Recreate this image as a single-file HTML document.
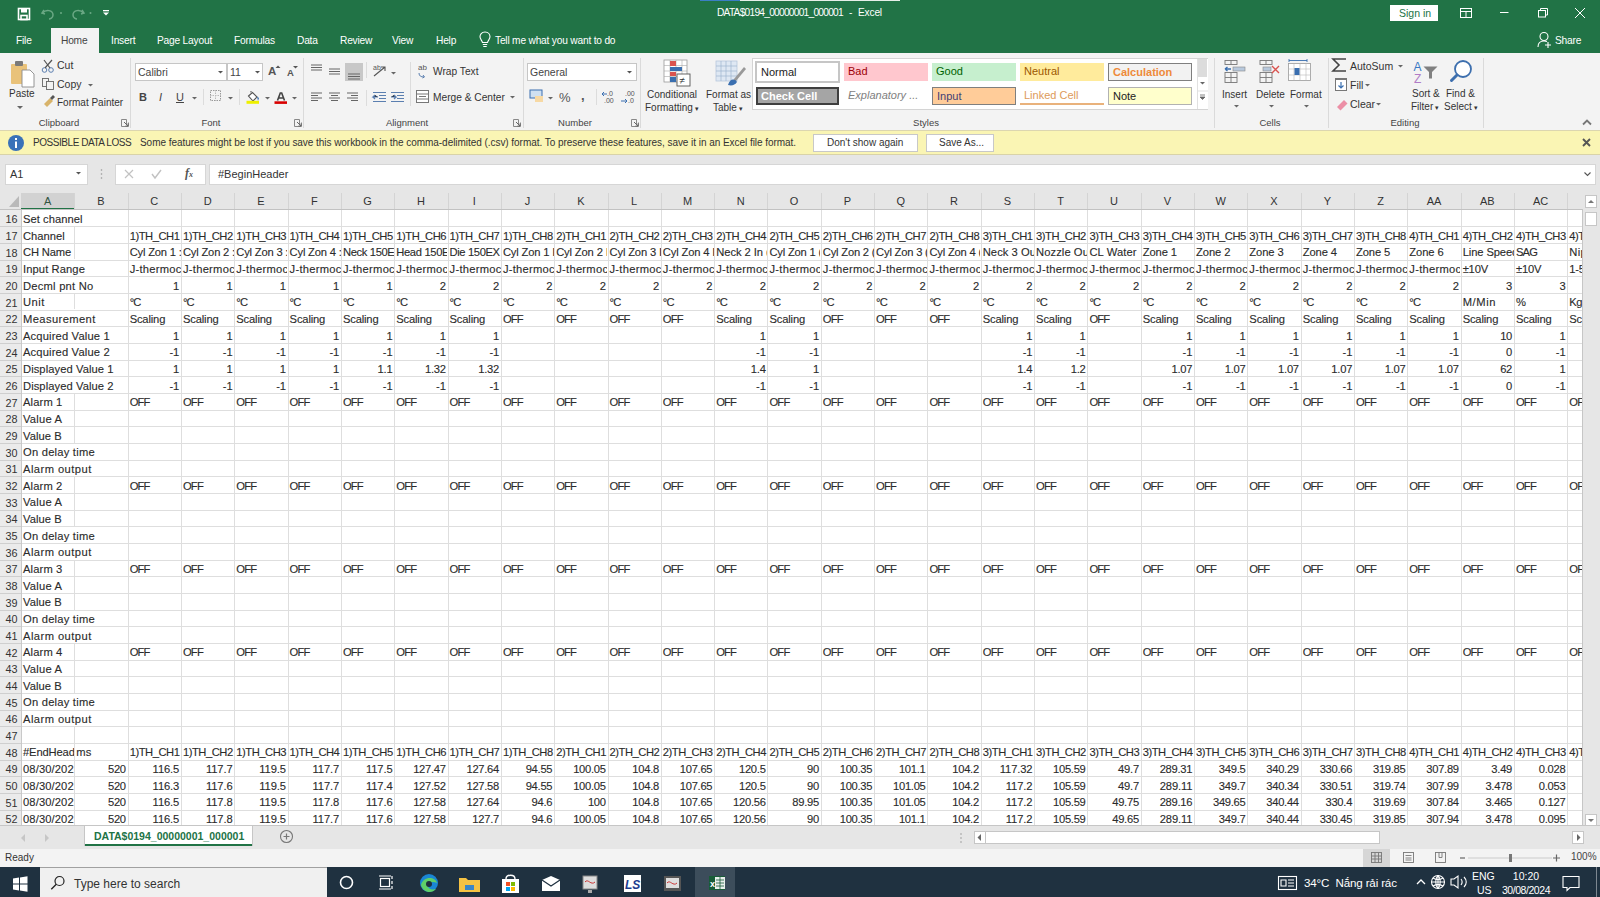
<!DOCTYPE html><html><head><meta charset="utf-8"><style>html,body{margin:0;padding:0;width:1600px;height:897px;overflow:hidden;position:relative;background:#fff;font-family:'Liberation Sans', sans-serif} .c{position:absolute;height:14px;overflow:hidden;white-space:nowrap;box-sizing:border-box;font:11.2px 'Liberation Sans', sans-serif;color:#2b2b2b;letter-spacing:-0.4px;-webkit-text-stroke:0.12px #2b2b2b} .r{text-align:right;padding-right:1.7px} .l{text-align:left;padding-left:2px} .d{letter-spacing:0.35px}</style></head><body><div style="position:absolute;left:0px;top:0px;width:1600px;height:53px;background:#217346"></div><div style="position:absolute;left:700px;top:0px;width:40px;height:1px;background:#3b7fc4"></div><div style="position:absolute;left:740px;top:0px;width:160px;height:1px;background:#e6efe9"></div><svg style="position:absolute;left:0;top:0" width="130" height="27">
<g fill="none" stroke="#fff" stroke-width="1.6">
<rect x="18.5" y="8.5" width="11" height="11"/>
<rect x="21" y="9" width="6" height="3.5" fill="#fff" stroke="none"/>
<rect x="21" y="15.5" width="6" height="4" />
</g>
<g fill="none" stroke="#6aa884" stroke-width="1.5">
<path d="M44 10 l-2 3 l3 1"/><path d="M42.5 13 C46 9,53 10,53 15 C53 18,50 19,49 19"/>
<path d="M82 10 l2 3 l-3 1"/><path d="M83.5 13 C80 9,73 10,73 15 C73 18,76 19,77 19"/>
</g>
<circle cx="61" cy="13" r="1" fill="#6aa884"/><circle cx="90.5" cy="13" r="1" fill="#6aa884"/>
<rect x="103" y="10" width="6" height="1.3" fill="#fff"/>
<path d="M103 12.5 h6 l-3 3 z" fill="#fff"/>
</svg><div style="position:absolute;left:717px;top:7px;white-space:nowrap;font:10.2px 'Liberation Sans', sans-serif;color:#fff;letter-spacing:-0.75px">DATA$0194_00000001_000001</div><div style="position:absolute;left:849px;top:7px;white-space:nowrap;font:10.2px 'Liberation Sans', sans-serif;color:#fff;">-</div><div style="position:absolute;left:858px;top:7px;white-space:nowrap;font:10.2px 'Liberation Sans', sans-serif;color:#fff;letter-spacing:-0.2px">Excel</div><div style="position:absolute;left:1390px;top:5px;width:48px;height:16px;background:#fff"></div><div style="position:absolute;left:1399px;top:7px;white-space:nowrap;font:10.5px 'Liberation Sans', sans-serif;color:#217346;">Sign in</div><svg style="position:absolute;left:1450;top:0" width="150" height="27">
<g fill="none" stroke="#fff" stroke-width="1">
<rect x="10.5" y="8.5" width="11" height="9"/><path d="M10.5 11.5 h11 M16 11.5 v6"/>
<path d="M50 12.5 h8.5"/>
<rect x="88.5" y="10.5" width="7" height="6.5"/><path d="M90.5 10.5 v-2 h7 v6.5 h-2"/>
<path d="M125 8 l10 10 M135 8 l-10 10"/>
</g></svg><div style="position:absolute;left:51px;top:28px;width:48px;height:25px;background:#f3f3f3"></div><div style="position:absolute;left:16px;top:35px;white-space:nowrap;font:10.2px 'Liberation Sans', sans-serif;color:#fff;letter-spacing:-0.2px">File</div><div style="position:absolute;left:61px;top:35px;white-space:nowrap;font:10.2px 'Liberation Sans', sans-serif;color:#444;letter-spacing:-0.2px">Home</div><div style="position:absolute;left:111px;top:35px;white-space:nowrap;font:10.2px 'Liberation Sans', sans-serif;color:#fff;letter-spacing:-0.2px">Insert</div><div style="position:absolute;left:157px;top:35px;white-space:nowrap;font:10.2px 'Liberation Sans', sans-serif;color:#fff;letter-spacing:-0.2px">Page Layout</div><div style="position:absolute;left:234px;top:35px;white-space:nowrap;font:10.2px 'Liberation Sans', sans-serif;color:#fff;letter-spacing:-0.2px">Formulas</div><div style="position:absolute;left:297px;top:35px;white-space:nowrap;font:10.2px 'Liberation Sans', sans-serif;color:#fff;letter-spacing:-0.2px">Data</div><div style="position:absolute;left:340px;top:35px;white-space:nowrap;font:10.2px 'Liberation Sans', sans-serif;color:#fff;letter-spacing:-0.2px">Review</div><div style="position:absolute;left:392px;top:35px;white-space:nowrap;font:10.2px 'Liberation Sans', sans-serif;color:#fff;letter-spacing:-0.2px">View</div><div style="position:absolute;left:436px;top:35px;white-space:nowrap;font:10.2px 'Liberation Sans', sans-serif;color:#fff;letter-spacing:-0.2px">Help</div><svg style="position:absolute;left:478px;top:30px" width="14" height="20"><g fill="none" stroke="#fff" stroke-width="1.1">
<path d="M7 2 C3.5 2 2 4.5 2 6.8 C2 9 4 10.5 4.5 12.5 L9.5 12.5 C10 10.5 12 9 12 6.8 C12 4.5 10.5 2 7 2 Z"/><path d="M4.8 14.5 h4.4 M5.3 16.5 h3.4"/></g></svg><div style="position:absolute;left:495px;top:35px;white-space:nowrap;font:10.2px 'Liberation Sans', sans-serif;color:#fff;letter-spacing:-0.2px">Tell me what you want to do</div><svg style="position:absolute;left:1536px;top:30px" width="18" height="20"><g fill="none" stroke="#fff" stroke-width="1.1">
<circle cx="8" cy="6.5" r="4"/><path d="M2 17 C2 12.5 5 11 8 11 C9 11 10 11.2 11 11.6"/><path d="M12 12 v6 M9 15 h6"/></g></svg><div style="position:absolute;left:1555px;top:35px;white-space:nowrap;font:10.2px 'Liberation Sans', sans-serif;color:#fff;letter-spacing:-0.2px">Share</div><div style="position:absolute;left:0px;top:53px;width:1600px;height:78px;background:#f3f3f3"></div><div style="position:absolute;left:130px;top:58px;width:1px;height:70px;background:#dadada"></div><div style="position:absolute;left:303px;top:58px;width:1px;height:70px;background:#dadada"></div><div style="position:absolute;left:523px;top:58px;width:1px;height:70px;background:#dadada"></div><div style="position:absolute;left:640px;top:58px;width:1px;height:70px;background:#dadada"></div><div style="position:absolute;left:1214px;top:58px;width:1px;height:70px;background:#dadada"></div><div style="position:absolute;left:1328px;top:58px;width:1px;height:70px;background:#dadada"></div><div style="position:absolute;left:1483px;top:58px;width:1px;height:70px;background:#dadada"></div><div style="position:absolute;left:-1px;top:117px;width:120px;text-align:center;font:9.5px 'Liberation Sans', sans-serif;color:#444;">Clipboard</div><div style="position:absolute;left:151px;top:117px;width:120px;text-align:center;font:9.5px 'Liberation Sans', sans-serif;color:#444;">Font</div><div style="position:absolute;left:347px;top:117px;width:120px;text-align:center;font:9.5px 'Liberation Sans', sans-serif;color:#444;">Alignment</div><div style="position:absolute;left:515px;top:117px;width:120px;text-align:center;font:9.5px 'Liberation Sans', sans-serif;color:#444;">Number</div><div style="position:absolute;left:866px;top:117px;width:120px;text-align:center;font:9.5px 'Liberation Sans', sans-serif;color:#444;">Styles</div><div style="position:absolute;left:1210px;top:117px;width:120px;text-align:center;font:9.5px 'Liberation Sans', sans-serif;color:#444;">Cells</div><div style="position:absolute;left:1345px;top:117px;width:120px;text-align:center;font:9.5px 'Liberation Sans', sans-serif;color:#444;">Editing</div><svg style="position:absolute;left:121px;top:119px" width="8" height="8"><path d="M0.5 0.5 h5 v5 M0.5 0.5 v7 h7 v-4" fill="none" stroke="#888" stroke-width="1"/><path d="M3 3 l4 4 M7 4.5 v2.5 h-2.5" fill="none" stroke="#666"/></svg><svg style="position:absolute;left:294px;top:119px" width="8" height="8"><path d="M0.5 0.5 h5 v5 M0.5 0.5 v7 h7 v-4" fill="none" stroke="#888" stroke-width="1"/><path d="M3 3 l4 4 M7 4.5 v2.5 h-2.5" fill="none" stroke="#666"/></svg><svg style="position:absolute;left:513px;top:119px" width="8" height="8"><path d="M0.5 0.5 h5 v5 M0.5 0.5 v7 h7 v-4" fill="none" stroke="#888" stroke-width="1"/><path d="M3 3 l4 4 M7 4.5 v2.5 h-2.5" fill="none" stroke="#666"/></svg><svg style="position:absolute;left:631px;top:119px" width="8" height="8"><path d="M0.5 0.5 h5 v5 M0.5 0.5 v7 h7 v-4" fill="none" stroke="#888" stroke-width="1"/><path d="M3 3 l4 4 M7 4.5 v2.5 h-2.5" fill="none" stroke="#666"/></svg><svg style="position:absolute;left:8px;top:58px" width="30" height="60">
<rect x="3" y="6" width="16" height="20" rx="1" fill="#e9c27a"/>
<rect x="7" y="3" width="8" height="5" rx="1" fill="#7a7a7a"/>
<path d="M14 12 h8 l4 4 v13 h-12 z" fill="#fff" stroke="#8a8a8a" stroke-width="0.9"/>
</svg><div style="position:absolute;left:9px;top:88px;white-space:nowrap;font:10px 'Liberation Sans', sans-serif;color:#333;">Paste</div><svg style="position:absolute;left:17px;top:106px" width="8" height="5"><path d="M0 0 h6 l-3 3 z" fill="#666"/></svg><svg style="position:absolute;left:40px;top:58px" width="18" height="52">
<g fill="none" stroke="#5b7fb0" stroke-width="1"><circle cx="4.5" cy="12" r="2.3"/><circle cx="11" cy="12" r="2.3"/></g>
<path d="M5 10 L12 2 M10 10 L4 2" stroke="#555" stroke-width="1.2"/>
<g fill="none" stroke="#666" stroke-width="0.9"><rect x="2.5" y="20.5" width="6" height="8"/><rect x="6.5" y="23.5" width="7" height="8" fill="#f3f3f3"/></g>
<path d="M4 46 l6 -6 l3 3 l-6 6 z" fill="#d8b36a"/><path d="M10 40 l3 -3 l2 2 l-3 3z" fill="#555"/>
</svg><div style="position:absolute;left:57px;top:59px;white-space:nowrap;font:10.5px 'Liberation Sans', sans-serif;color:#333;">Cut</div><div style="position:absolute;left:57px;top:78px;white-space:nowrap;font:10.5px 'Liberation Sans', sans-serif;color:#333;">Copy</div><svg style="position:absolute;left:88px;top:84px" width="8" height="5"><path d="M0 0 h5 l-2.5 2.5 z" fill="#666"/></svg><div style="position:absolute;left:57px;top:97px;white-space:nowrap;font:10px 'Liberation Sans', sans-serif;color:#333;">Format Painter</div><div style="position:absolute;left:135px;top:63px;width:92px;height:18px;background:#fff;border:1px solid #c6c6c6;box-sizing:border-box"></div><div style="position:absolute;left:138px;top:66px;white-space:nowrap;font:10.5px 'Liberation Sans', sans-serif;color:#444;">Calibri</div><svg style="position:absolute;left:218px;top:71px" width="6" height="4"><path d="M0 0 h5 l-2.5 2.5 z" fill="#555"/></svg><div style="position:absolute;left:227px;top:63px;width:36px;height:18px;background:#fff;border:1px solid #c6c6c6;box-sizing:border-box"></div><div style="position:absolute;left:230px;top:66px;white-space:nowrap;font:10.5px 'Liberation Sans', sans-serif;color:#444;">11</div><svg style="position:absolute;left:255px;top:71px" width="6" height="4"><path d="M0 0 h5 l-2.5 2.5 z" fill="#555"/></svg><div style="position:absolute;left:268px;top:65px;white-space:nowrap;font:bold 11.5px 'Liberation Sans', sans-serif;color:#555;">A</div><svg style="position:absolute;left:275px;top:65px" width="6" height="4"><path d="M0.5 3 L3 0.5 L5.5 3z" fill="#555"/></svg><div style="position:absolute;left:287px;top:67px;white-space:nowrap;font:bold 9.5px 'Liberation Sans', sans-serif;color:#555;">A</div><svg style="position:absolute;left:293px;top:66px" width="6" height="4"><path d="M0 0 h5 l-2.5 2.5 z" fill="#555"/></svg><div style="position:absolute;left:139px;top:91px;white-space:nowrap;font:bold 11px 'Liberation Sans', sans-serif;color:#444;">B</div><div style="position:absolute;left:159px;top:91px;white-space:nowrap;font:italic 11px 'Liberation Sans', sans-serif;color:#444;">I</div><div style="position:absolute;left:176px;top:91px;white-space:nowrap;font:11px 'Liberation Sans', sans-serif;color:#444;text-decoration:underline;">U</div><svg style="position:absolute;left:192px;top:97px" width="6" height="4"><path d="M0 0 h5 l-2.5 2.5 z" fill="#666"/></svg><div style="position:absolute;left:203px;top:89px;width:1px;height:16px;background:#dcdcdc"></div><svg style="position:absolute;left:210px;top:90px" width="12" height="12"><rect x="0.5" y="0.5" width="10" height="10" fill="none" stroke="#999" stroke-dasharray="1.5 1"/><path d="M5.5 0 v11 M0 5.5 h11" stroke="#bbb" stroke-dasharray="1.5 1"/></svg><svg style="position:absolute;left:228px;top:97px" width="6" height="4"><path d="M0 0 h5 l-2.5 2.5 z" fill="#666"/></svg><div style="position:absolute;left:239px;top:89px;width:1px;height:16px;background:#dcdcdc"></div><svg style="position:absolute;left:245px;top:90px" width="16" height="16"><path d="M3.5 6 l4 -3.5 l4.5 4.5 l-4 4 z" fill="#fff" stroke="#555" stroke-width="1.1"/><path d="M6 2.5 v-1.5" stroke="#555" stroke-width="1.1"/><path d="M12 6.5 l2 1.5 l-1 3z" fill="#3a6fb0"/><rect x="1.5" y="10.8" width="12.5" height="3" fill="#eef000"/></svg><svg style="position:absolute;left:265px;top:97px" width="6" height="4"><path d="M0 0 h5 l-2.5 2.5 z" fill="#666"/></svg><svg style="position:absolute;left:273px;top:90px" width="16" height="16"><path d="M4.5 10.5 L7.3 3 h1.4 L11.5 10.5 M5.8 8 h4.4" fill="none" stroke="#444" stroke-width="1.6"/><rect x="1.5" y="11.3" width="12.5" height="2.6" fill="#d80000"/></svg><svg style="position:absolute;left:292px;top:97px" width="6" height="4"><path d="M0 0 h5 l-2.5 2.5 z" fill="#666"/></svg><svg style="position:absolute;left:308px;top:60px" width="215" height="52">
<g stroke="#666" stroke-width="1.1">
<path d="M3 5 h11 M3 7.5 h11 M3 10 h11"/>
<path d="M21 9 h11 M21 11.5 h11 M21 14 h11"/>
<rect x="37" y="3" width="18" height="18" fill="#c8c8c8" stroke="none"/>
<path d="M40 14 h12 M40 16.5 h12 M40 19 h12"/>
<path d="M3 33 h11 M3 35.5 h7 M3 38 h11 M3 40.5 h7"/>
<path d="M21 33 h11 M23 35.5 h7 M21 38 h11 M23 40.5 h7"/>
<path d="M39 33 h11 M43 35.5 h7 M39 38 h11 M43 40.5 h7"/>
</g>
<rect x="58" y="2" width="1" height="16" fill="#dcdcdc"/><rect x="58" y="30" width="1" height="16" fill="#dcdcdc"/>
<g stroke="#5b7fb0" stroke-width="1.2"><path d="M65 32.5 h13 M71 35.5 h7 M71 38.5 h7 M65 41.5 h13"/><path d="M70 37 h-5 l2 -2 M65 37 l2 2"/>
<path d="M83 32.5 h13 M89 35.5 h7 M89 38.5 h7 M83 41.5 h13"/><path d="M83 37 h5 l-2 -2 M88 37 l-2 2"/></g>
<g fill="none" stroke="#555" stroke-width="1.1"><path d="M66 16 l11 -9 M73 7 l4 0 l0 4"/></g>
<text x="65" y="10" font-size="7" fill="#555" font-family="Liberation Sans">ab</text>
<path d="M83 12 h5 l-2.5 2.5z" fill="#666"/>
<rect x="102" y="2" width="1" height="44" fill="#dcdcdc"/>
</svg><div style="position:absolute;left:309px;top:62px;white-space:nowrap;"></div><svg style="position:absolute;left:418px;top:63px" width="14" height="16"><text x="0" y="7" font-size="8" fill="#555" font-family="Liberation Sans">ab</text><path d="M1 10 c0 3 2 4 5 4 M5 12 l1.5 2 l-2 1" fill="none" stroke="#5b7fb0" stroke-width="1"/></svg><div style="position:absolute;left:433px;top:66px;white-space:nowrap;font:10.2px 'Liberation Sans', sans-serif;color:#333;">Wrap Text</div><svg style="position:absolute;left:416px;top:90px" width="14" height="14"><rect x="0.5" y="0.5" width="12" height="12" fill="#fff" stroke="#777"/><path d="M0.5 4 h12 M0.5 9 h12 M3 6.5 h7" stroke="#777"/></svg><div style="position:absolute;left:433px;top:92px;white-space:nowrap;font:10.2px 'Liberation Sans', sans-serif;color:#333;">Merge &amp; Center</div><svg style="position:absolute;left:510px;top:96px" width="6" height="4"><path d="M0 0 h5 l-2.5 2.5 z" fill="#666"/></svg><div style="position:absolute;left:527px;top:63px;width:110px;height:18px;background:#fff;border:1px solid #c6c6c6;box-sizing:border-box"></div><div style="position:absolute;left:530px;top:66px;white-space:nowrap;font:10.5px 'Liberation Sans', sans-serif;color:#444;">General</div><svg style="position:absolute;left:627px;top:71px" width="6" height="4"><path d="M0 0 h5 l-2.5 2.5 z" fill="#555"/></svg><svg style="position:absolute;left:529px;top:89px" width="22" height="16"><rect x="1" y="1" width="12" height="8" fill="#cfe0f1" stroke="#3a6fb0"/><rect x="6" y="7" width="8" height="6" fill="#f7d9a4"/></svg><svg style="position:absolute;left:548px;top:97px" width="6" height="4"><path d="M0 0 h5 l-2.5 2.5 z" fill="#666"/></svg><div style="position:absolute;left:559px;top:90px;white-space:nowrap;font:13px 'Liberation Sans', sans-serif;color:#555;">%</div><div style="position:absolute;left:581px;top:88px;white-space:nowrap;font:bold 13px 'Liberation Sans', sans-serif;color:#555;">,</div><div style="position:absolute;left:596px;top:89px;width:1px;height:16px;background:#dcdcdc"></div><svg style="position:absolute;left:600px;top:89px" width="40" height="16"><text x="7" y="7" font-size="7" fill="#555" font-family="Liberation Sans">.0</text><text x="4" y="14" font-size="7" fill="#555" font-family="Liberation Sans">.00</text><path d="M2 5 h5 M2 5 l2 -2 M2 5 l2 2" stroke="#3a6fb0" fill="none"/><text x="25" y="7" font-size="7" fill="#555" font-family="Liberation Sans">.00</text><text x="28" y="14" font-size="7" fill="#555" font-family="Liberation Sans">.0</text><path d="M21 12 h6 M27 12 l-2 -2 M27 12 l-2 2" stroke="#3a6fb0" fill="none"/></svg><svg style="position:absolute;left:660px;top:59px" width="90" height="30">
<g stroke="#999" stroke-width="0.8" fill="#fff"><rect x="4" y="1" width="23" height="22"/></g>
<path d="M4 6.5 h23 M4 12 h23 M4 17.5 h23 M10 1 v22 M16 1 v22 M22 1 v22" stroke="#aaa" stroke-width="0.6"/>
<rect x="10" y="2" width="6" height="5" fill="#d9534f"/><rect x="10" y="8" width="12" height="4" fill="#3a6fb0"/><rect x="10" y="13" width="6" height="4" fill="#d9534f"/><rect x="10" y="18" width="6" height="5" fill="#3a6fb0"/>
<rect x="17" y="15" width="13" height="12" fill="#fff" stroke="#555" stroke-width="0.9"/><text x="19.5" y="25" font-size="10" fill="#333" font-family="Liberation Sans">≠</text>
<g stroke="#b7c7dc" stroke-width="0.8" fill="#dfe8f3"><rect x="56" y="2" width="21" height="20"/></g>
<path d="M56 7 h21 M56 12 h21 M56 17 h21 M61 2 v20 M66 2 v20 M71 2 v20" stroke="#9fb4cf" stroke-width="0.7"/>
<path d="M84 8 l-10 12 l-2 4 l4 -2 l10 -12z" fill="#999"/><path d="M68 26 c2 -6 6 -7 9 -3 c-2 3 -5 4 -9 3z" fill="#3a6fb0"/>
</svg><div style="position:absolute;left:647px;top:89px;white-space:nowrap;font:10px 'Liberation Sans', sans-serif;color:#333;">Conditional</div><div style="position:absolute;left:645px;top:102px;white-space:nowrap;font:10px 'Liberation Sans', sans-serif;color:#333;">Formatting<span style="font-size:7px"> ▾</span></div><div style="position:absolute;left:706px;top:89px;white-space:nowrap;font:10px 'Liberation Sans', sans-serif;color:#333;">Format as</div><div style="position:absolute;left:713px;top:102px;white-space:nowrap;font:10px 'Liberation Sans', sans-serif;color:#333;">Table<span style="font-size:7px"> ▾</span></div><div style="position:absolute;left:752px;top:58px;width:456px;height:52px;background:#fff;border:1px solid #d4d4d4;box-sizing:border-box"></div><div style="position:absolute;left:755px;top:61px;width:85px;height:22px;box-sizing:border-box;background:#fff;border:2px solid #c6c6c6;"><div style="position:absolute;left:4px;top:3px;white-space:nowrap;font:11px 'Liberation Sans', sans-serif;color:#222;">Normal</div></div><div style="position:absolute;left:844px;top:63px;width:84px;height:18px;box-sizing:border-box;background:#ffc7ce;"><div style="position:absolute;left:4px;top:3px;white-space:nowrap;font:11px 'Liberation Sans', sans-serif;color:#9c0006;top:2px;">Bad</div></div><div style="position:absolute;left:932px;top:63px;width:84px;height:18px;box-sizing:border-box;background:#c6efce;"><div style="position:absolute;left:4px;top:3px;white-space:nowrap;font:11px 'Liberation Sans', sans-serif;color:#006100;top:2px;">Good</div></div><div style="position:absolute;left:1020px;top:63px;width:84px;height:18px;box-sizing:border-box;background:#ffeb9c;"><div style="position:absolute;left:4px;top:3px;white-space:nowrap;font:11px 'Liberation Sans', sans-serif;color:#9c5700;top:2px;">Neutral</div></div><div style="position:absolute;left:1108px;top:63px;width:84px;height:18px;box-sizing:border-box;background:#f2f2f2;border:1px solid #7f7f7f;"><div style="position:absolute;left:4px;top:3px;white-space:nowrap;font:11px 'Liberation Sans', sans-serif;color:#ee8a3a;font-weight:bold;top:2px;">Calculation</div></div><div style="position:absolute;left:756px;top:87px;width:83px;height:18px;box-sizing:border-box;background:#a5a5a5;border:2px solid #3f3f3f;"><div style="position:absolute;left:4px;top:3px;white-space:nowrap;font:11px 'Liberation Sans', sans-serif;color:#fff;font-weight:bold;top:1px;left:3px;">Check Cell</div></div><div style="position:absolute;left:844px;top:87px;width:84px;height:18px;box-sizing:border-box;background:#fff;"><div style="position:absolute;left:4px;top:3px;white-space:nowrap;font:11px 'Liberation Sans', sans-serif;color:#7f7f7f;font-style:italic;top:2px;">Explanatory ...</div></div><div style="position:absolute;left:932px;top:87px;width:84px;height:18px;box-sizing:border-box;background:#ffcc99;border:1px solid #7f7f7f;"><div style="position:absolute;left:4px;top:3px;white-space:nowrap;font:11px 'Liberation Sans', sans-serif;color:#3f3f76;top:2px;">Input</div></div><div style="position:absolute;left:1020px;top:87px;width:84px;height:18px;box-sizing:border-box;background:#fff;border-bottom:2px solid #e9b27c;"><div style="position:absolute;left:4px;top:3px;white-space:nowrap;font:11px 'Liberation Sans', sans-serif;color:#dd9a5a;top:2px;">Linked Cell</div></div><div style="position:absolute;left:1108px;top:87px;width:84px;height:18px;box-sizing:border-box;background:#ffffcc;border:1px solid #b2b2b2;"><div style="position:absolute;left:4px;top:3px;white-space:nowrap;font:11px 'Liberation Sans', sans-serif;color:#222;top:2px;">Note</div></div><div style="position:absolute;left:1197px;top:59px;width:10px;height:50px;background:#fff;border-left:1px solid #e1e1e1"></div><div style="position:absolute;left:1198px;top:59px;width:9px;height:18px;background:#dcdcdc"></div><svg style="position:absolute;left:1197px;top:76px" width="11" height="40"><path d="M3 6 h5 l-2.5 2.5z" fill="#666"/><path d="M1 15 h10" stroke="#e1e1e1"/><path d="M3 19 h5 M3 21 h5 l-2.5 2.5z" fill="#666" stroke="#666" stroke-width="0.8"/></svg><svg style="position:absolute;left:1220px;top:58px" width="110" height="34">
<g fill="none" stroke="#777" stroke-width="0.9">
<rect x="5" y="2.5" width="12" height="4"/><path d="M11 2.5 v4"/>
<rect x="5" y="14.5" width="12" height="10"/><path d="M11 14.5 v10 M5 19.5 h12"/>
<rect x="40" y="2.5" width="12" height="4"/><path d="M46 2.5 v4"/>
<rect x="40" y="14.5" width="12" height="10"/><path d="M46 14.5 v10 M40 19.5 h12"/>
</g>
<rect x="13" y="9" width="12" height="4" fill="#b8c9dd" stroke="#888" stroke-width="0.6"/>
<path d="M11 11 h-6 M5 11 l2.5 -2 M5 11 l2.5 2" stroke="#3a6fb0" stroke-width="1.4" fill="none"/>
<rect x="43" y="9" width="8" height="4" fill="#b8c9dd" stroke="#888" stroke-width="0.6"/>
<path d="M52 8 l7 7 M59 8 l-7 7" stroke="#d9534f" stroke-width="1.4"/>
<path d="M69 1 v3 M87 1 v3 M69 2.5 h18" stroke="#3a6fb0" stroke-width="0.9"/>
<rect x="68.5" y="5.5" width="22" height="17" fill="#fff" stroke="#999" stroke-width="0.8"/>
<path d="M68.5 11 h22 M68.5 17 h22 M74 5.5 v17 M80 5.5 v17 M86 5.5 v17" stroke="#bbb" stroke-width="0.6"/>
<rect x="74.5" y="10" width="5" height="7" fill="#3a6fb0"/>
</svg><div style="position:absolute;left:1222px;top:89px;white-space:nowrap;font:10px 'Liberation Sans', sans-serif;color:#333;">Insert</div><div style="position:absolute;left:1256px;top:89px;white-space:nowrap;font:10px 'Liberation Sans', sans-serif;color:#333;">Delete</div><div style="position:absolute;left:1290px;top:89px;white-space:nowrap;font:10px 'Liberation Sans', sans-serif;color:#333;">Format</div><svg style="position:absolute;left:1234px;top:105px" width="6" height="4"><path d="M0 0 h5 l-2.5 2.5 z" fill="#666"/></svg><svg style="position:absolute;left:1269px;top:105px" width="6" height="4"><path d="M0 0 h5 l-2.5 2.5 z" fill="#666"/></svg><svg style="position:absolute;left:1304px;top:105px" width="6" height="4"><path d="M0 0 h5 l-2.5 2.5 z" fill="#666"/></svg><svg style="position:absolute;left:1330px;top:56px" width="150" height="56">
<path d="M16 3 h-13 l6 6 l-6 6 h13" fill="none" stroke="#444" stroke-width="1.6"/>
<rect x="5.5" y="22.5" width="11" height="12" fill="#fff" stroke="#777"/><rect x="5" y="22" width="12" height="2" fill="#777"/>
<path d="M11 26 v6 M8.5 29.5 l2.5 2.5 l2.5 -2.5" stroke="#3a6fb0" stroke-width="1.2" fill="none"/>
<path d="M7 51 l7 -7 l3.5 3.5 l-7 7z" fill="#ec8fa6"/>
<text x="83.5" y="14.5" font-size="12" fill="#3a78c4" font-family="Liberation Sans">A</text>
<text x="84" y="26.5" font-size="12" fill="#b07cc6" font-family="Liberation Sans">Z</text>
<path d="M93.5 10.5 h14 l-5.5 5.5 v6.5 h-3 v-6.5z" fill="#808080"/>
<circle cx="133" cy="13" r="8" fill="#fff" stroke="#3d6fae" stroke-width="1.8"/><path d="M127 19 l-5.5 5.5" stroke="#3d6fae" stroke-width="3" stroke-linecap="round"/>
</svg><div style="position:absolute;left:1350px;top:60px;white-space:nowrap;font:10.5px 'Liberation Sans', sans-serif;color:#333;">AutoSum</div><svg style="position:absolute;left:1398px;top:65px" width="6" height="4"><path d="M0 0 h5 l-2.5 2.5 z" fill="#666"/></svg><div style="position:absolute;left:1350px;top:79px;white-space:nowrap;font:10.5px 'Liberation Sans', sans-serif;color:#333;">Fill</div><svg style="position:absolute;left:1365px;top:84px" width="6" height="4"><path d="M0 0 h5 l-2.5 2.5 z" fill="#666"/></svg><div style="position:absolute;left:1350px;top:98px;white-space:nowrap;font:10.5px 'Liberation Sans', sans-serif;color:#333;">Clear</div><svg style="position:absolute;left:1376px;top:103px" width="6" height="4"><path d="M0 0 h5 l-2.5 2.5 z" fill="#666"/></svg><div style="position:absolute;left:1412px;top:88px;white-space:nowrap;font:10px 'Liberation Sans', sans-serif;color:#333;">Sort &amp;</div><div style="position:absolute;left:1411px;top:101px;white-space:nowrap;font:10px 'Liberation Sans', sans-serif;color:#333;">Filter<span style="font-size:7px"> ▾</span></div><div style="position:absolute;left:1446px;top:88px;white-space:nowrap;font:10px 'Liberation Sans', sans-serif;color:#333;">Find &amp;</div><div style="position:absolute;left:1444px;top:101px;white-space:nowrap;font:10px 'Liberation Sans', sans-serif;color:#333;">Select<span style="font-size:7px"> ▾</span></div><svg style="position:absolute;left:1582px;top:119px" width="10" height="7"><path d="M1 5.5 l4 -4 l4 4" fill="none" stroke="#777" stroke-width="1.8"/></svg><div style="position:absolute;left:0px;top:130px;width:1600px;height:25px;background:#faf5b4;border-top:1px solid #dcd6b0;border-bottom:1px solid #d9d3a8;box-sizing:border-box"></div><svg style="position:absolute;left:7px;top:134px" width="18" height="18"><circle cx="9" cy="9" r="8" fill="#3a72b8"/><rect x="8" y="7.5" width="2" height="6.5" fill="#fff"/><rect x="8" y="4" width="2" height="2" fill="#fff"/></svg><div style="position:absolute;left:33px;top:137px;white-space:nowrap;font:10px 'Liberation Sans', sans-serif;color:#333;letter-spacing:-0.45px">POSSIBLE DATA LOSS</div><div style="position:absolute;left:140px;top:137px;white-space:nowrap;font:10px 'Liberation Sans', sans-serif;color:#333;letter-spacing:-0.045px">Some features might be lost if you save this workbook in the comma-delimited (.csv) format. To preserve these features, save it in an Excel file format.</div><div style="position:absolute;left:813px;top:134px;width:105px;height:18px;background:#fff;border:1px solid #c8c8c8;box-sizing:border-box"></div><div style="position:absolute;left:827px;top:137px;white-space:nowrap;font:10px 'Liberation Sans', sans-serif;color:#333;">Don't show again</div><div style="position:absolute;left:926px;top:134px;width:68px;height:18px;background:#fff;border:1px solid #c8c8c8;box-sizing:border-box"></div><div style="position:absolute;left:939px;top:137px;white-space:nowrap;font:10px 'Liberation Sans', sans-serif;color:#333;">Save As...</div><svg style="position:absolute;left:1582px;top:138px" width="10" height="10"><path d="M1 1 l7 7 M8 1 l-7 7" stroke="#555" stroke-width="1.9"/></svg><div style="position:absolute;left:0px;top:155px;width:1600px;height:38px;background:#e6e6e6"></div><div style="position:absolute;left:5px;top:164px;width:83px;height:21px;background:#fff;border:1px solid #d6d6d6;box-sizing:border-box"></div><div style="position:absolute;left:10px;top:168px;white-space:nowrap;font:11px 'Liberation Sans', sans-serif;color:#333;">A1</div><svg style="position:absolute;left:76px;top:172px" width="6" height="4"><path d="M0 0 h5 l-2.5 2.5 z" fill="#555"/></svg><svg style="position:absolute;left:100px;top:168px" width="3" height="14"><circle cx="1.5" cy="2" r="0.8" fill="#999"/><circle cx="1.5" cy="6" r="0.8" fill="#999"/><circle cx="1.5" cy="10" r="0.8" fill="#999"/></svg><div style="position:absolute;left:115px;top:164px;width:91px;height:21px;background:#fff;border:1px solid #d6d6d6;box-sizing:border-box"></div><svg style="position:absolute;left:120px;top:166px" width="80" height="16"><path d="M5 4 l8 8 M13 4 l-8 8" stroke="#c2c2c2" stroke-width="1.2"/><path d="M32 8 l3 4 l6 -8" fill="none" stroke="#c2c2c2" stroke-width="1.4"/></svg><div style="position:absolute;left:185px;top:166px;white-space:nowrap;font:bold 12px 'Liberation Serif', serif;color:#555;"><i>f</i><span style="font-size:8px"><i>x</i></span></div><div style="position:absolute;left:209px;top:164px;width:1387px;height:21px;background:#fff;border:1px solid #d6d6d6;box-sizing:border-box"></div><div style="position:absolute;left:218px;top:168px;white-space:nowrap;font:11px 'Liberation Sans', sans-serif;color:#333;">#BeginHeader</div><svg style="position:absolute;left:1584px;top:172px" width="8" height="5"><path d="M0.5 0.5 l3 3 l3 -3" fill="none" stroke="#555" stroke-width="1.1"/></svg><div style="position:absolute;left:0px;top:193px;width:1583px;height:16px;background:#e6e6e6"></div><div style="position:absolute;left:0px;top:209px;width:21px;height:617px;background:#ebebeb"></div><div style="position:absolute;left:21px;top:209px;width:1562px;height:617px;background:#fff"></div><svg style="position:absolute;left:8px;top:195px" width="12" height="13"><path d="M11 1 v11 h-10 z" fill="#b9b9b9"/></svg><div style="position:absolute;left:21px;top:193px;width:53.33px;height:16px;background:#d2d2d2"></div><div style="position:absolute;left:21px;top:208px;width:53.32px;height:2px;background:#217346"></div><div style="position:absolute;left:21.00px;top:195px;width:53.32px;text-align:center;font:11px 'Liberation Sans', sans-serif;color:#33543f">A</div><div style="position:absolute;left:74.32px;top:193px;width:1px;height:16px;background:#d4d4d4"></div><div style="position:absolute;left:74.32px;top:195px;width:53.32px;text-align:center;font:11px 'Liberation Sans', sans-serif;color:#333">B</div><div style="position:absolute;left:127.64px;top:193px;width:1px;height:16px;background:#d4d4d4"></div><div style="position:absolute;left:127.64px;top:195px;width:53.32px;text-align:center;font:11px 'Liberation Sans', sans-serif;color:#333">C</div><div style="position:absolute;left:180.96px;top:193px;width:1px;height:16px;background:#d4d4d4"></div><div style="position:absolute;left:180.96px;top:195px;width:53.32px;text-align:center;font:11px 'Liberation Sans', sans-serif;color:#333">D</div><div style="position:absolute;left:234.28px;top:193px;width:1px;height:16px;background:#d4d4d4"></div><div style="position:absolute;left:234.28px;top:195px;width:53.32px;text-align:center;font:11px 'Liberation Sans', sans-serif;color:#333">E</div><div style="position:absolute;left:287.6px;top:193px;width:1px;height:16px;background:#d4d4d4"></div><div style="position:absolute;left:287.60px;top:195px;width:53.32px;text-align:center;font:11px 'Liberation Sans', sans-serif;color:#333">F</div><div style="position:absolute;left:340.92px;top:193px;width:1px;height:16px;background:#d4d4d4"></div><div style="position:absolute;left:340.92px;top:195px;width:53.32px;text-align:center;font:11px 'Liberation Sans', sans-serif;color:#333">G</div><div style="position:absolute;left:394.24px;top:193px;width:1px;height:16px;background:#d4d4d4"></div><div style="position:absolute;left:394.24px;top:195px;width:53.32px;text-align:center;font:11px 'Liberation Sans', sans-serif;color:#333">H</div><div style="position:absolute;left:447.56px;top:193px;width:1px;height:16px;background:#d4d4d4"></div><div style="position:absolute;left:447.56px;top:195px;width:53.32px;text-align:center;font:11px 'Liberation Sans', sans-serif;color:#333">I</div><div style="position:absolute;left:500.88px;top:193px;width:1px;height:16px;background:#d4d4d4"></div><div style="position:absolute;left:500.88px;top:195px;width:53.32px;text-align:center;font:11px 'Liberation Sans', sans-serif;color:#333">J</div><div style="position:absolute;left:554.2px;top:193px;width:1px;height:16px;background:#d4d4d4"></div><div style="position:absolute;left:554.20px;top:195px;width:53.32px;text-align:center;font:11px 'Liberation Sans', sans-serif;color:#333">K</div><div style="position:absolute;left:607.52px;top:193px;width:1px;height:16px;background:#d4d4d4"></div><div style="position:absolute;left:607.52px;top:195px;width:53.32px;text-align:center;font:11px 'Liberation Sans', sans-serif;color:#333">L</div><div style="position:absolute;left:660.84px;top:193px;width:1px;height:16px;background:#d4d4d4"></div><div style="position:absolute;left:660.84px;top:195px;width:53.32px;text-align:center;font:11px 'Liberation Sans', sans-serif;color:#333">M</div><div style="position:absolute;left:714.16px;top:193px;width:1px;height:16px;background:#d4d4d4"></div><div style="position:absolute;left:714.16px;top:195px;width:53.32px;text-align:center;font:11px 'Liberation Sans', sans-serif;color:#333">N</div><div style="position:absolute;left:767.48px;top:193px;width:1px;height:16px;background:#d4d4d4"></div><div style="position:absolute;left:767.48px;top:195px;width:53.32px;text-align:center;font:11px 'Liberation Sans', sans-serif;color:#333">O</div><div style="position:absolute;left:820.8px;top:193px;width:1px;height:16px;background:#d4d4d4"></div><div style="position:absolute;left:820.80px;top:195px;width:53.32px;text-align:center;font:11px 'Liberation Sans', sans-serif;color:#333">P</div><div style="position:absolute;left:874.12px;top:193px;width:1px;height:16px;background:#d4d4d4"></div><div style="position:absolute;left:874.12px;top:195px;width:53.32px;text-align:center;font:11px 'Liberation Sans', sans-serif;color:#333">Q</div><div style="position:absolute;left:927.44px;top:193px;width:1px;height:16px;background:#d4d4d4"></div><div style="position:absolute;left:927.44px;top:195px;width:53.32px;text-align:center;font:11px 'Liberation Sans', sans-serif;color:#333">R</div><div style="position:absolute;left:980.76px;top:193px;width:1px;height:16px;background:#d4d4d4"></div><div style="position:absolute;left:980.76px;top:195px;width:53.32px;text-align:center;font:11px 'Liberation Sans', sans-serif;color:#333">S</div><div style="position:absolute;left:1034.08px;top:193px;width:1px;height:16px;background:#d4d4d4"></div><div style="position:absolute;left:1034.08px;top:195px;width:53.32px;text-align:center;font:11px 'Liberation Sans', sans-serif;color:#333">T</div><div style="position:absolute;left:1087.4px;top:193px;width:1px;height:16px;background:#d4d4d4"></div><div style="position:absolute;left:1087.40px;top:195px;width:53.32px;text-align:center;font:11px 'Liberation Sans', sans-serif;color:#333">U</div><div style="position:absolute;left:1140.72px;top:193px;width:1px;height:16px;background:#d4d4d4"></div><div style="position:absolute;left:1140.72px;top:195px;width:53.32px;text-align:center;font:11px 'Liberation Sans', sans-serif;color:#333">V</div><div style="position:absolute;left:1194.04px;top:193px;width:1px;height:16px;background:#d4d4d4"></div><div style="position:absolute;left:1194.04px;top:195px;width:53.32px;text-align:center;font:11px 'Liberation Sans', sans-serif;color:#333">W</div><div style="position:absolute;left:1247.36px;top:193px;width:1px;height:16px;background:#d4d4d4"></div><div style="position:absolute;left:1247.36px;top:195px;width:53.32px;text-align:center;font:11px 'Liberation Sans', sans-serif;color:#333">X</div><div style="position:absolute;left:1300.68px;top:193px;width:1px;height:16px;background:#d4d4d4"></div><div style="position:absolute;left:1300.68px;top:195px;width:53.32px;text-align:center;font:11px 'Liberation Sans', sans-serif;color:#333">Y</div><div style="position:absolute;left:1354.0px;top:193px;width:1px;height:16px;background:#d4d4d4"></div><div style="position:absolute;left:1354.00px;top:195px;width:53.32px;text-align:center;font:11px 'Liberation Sans', sans-serif;color:#333">Z</div><div style="position:absolute;left:1407.32px;top:193px;width:1px;height:16px;background:#d4d4d4"></div><div style="position:absolute;left:1407.32px;top:195px;width:53.32px;text-align:center;font:11px 'Liberation Sans', sans-serif;color:#333">AA</div><div style="position:absolute;left:1460.64px;top:193px;width:1px;height:16px;background:#d4d4d4"></div><div style="position:absolute;left:1460.64px;top:195px;width:53.32px;text-align:center;font:11px 'Liberation Sans', sans-serif;color:#333">AB</div><div style="position:absolute;left:1513.96px;top:193px;width:1px;height:16px;background:#d4d4d4"></div><div style="position:absolute;left:1513.96px;top:195px;width:53.32px;text-align:center;font:11px 'Liberation Sans', sans-serif;color:#333">AC</div><div style="position:absolute;left:1567.28px;top:193px;width:1px;height:16px;background:#d4d4d4"></div><div style="position:absolute;left:1567.28px;top:195px;width:53.32px;text-align:center;font:11px 'Liberation Sans', sans-serif;color:#333">AD</div><div style="position:absolute;left:0px;top:209px;width:1583px;height:1px;background:#c2c2c2"></div><div style="position:absolute;left:21px;top:209px;width:1562px;height:0.0px;"></div><div style="position:absolute;left:0px;top:226.17px;width:21px;height:1px;background:#cfcfcf"></div><div style="position:absolute;left:21px;top:226.17px;width:1562px;height:1px;background:#dedede"></div><div style="position:absolute;left:0px;top:242.83px;width:21px;height:1px;background:#cfcfcf"></div><div style="position:absolute;left:21px;top:242.83px;width:1562px;height:1px;background:#dedede"></div><div style="position:absolute;left:0px;top:259.5px;width:21px;height:1px;background:#cfcfcf"></div><div style="position:absolute;left:21px;top:259.5px;width:1562px;height:1px;background:#dedede"></div><div style="position:absolute;left:0px;top:276.17px;width:21px;height:1px;background:#cfcfcf"></div><div style="position:absolute;left:21px;top:276.17px;width:1562px;height:1px;background:#dedede"></div><div style="position:absolute;left:0px;top:292.84px;width:21px;height:1px;background:#cfcfcf"></div><div style="position:absolute;left:21px;top:292.84px;width:1562px;height:1px;background:#dedede"></div><div style="position:absolute;left:0px;top:309.5px;width:21px;height:1px;background:#cfcfcf"></div><div style="position:absolute;left:21px;top:309.5px;width:1562px;height:1px;background:#dedede"></div><div style="position:absolute;left:0px;top:326.17px;width:21px;height:1px;background:#cfcfcf"></div><div style="position:absolute;left:21px;top:326.17px;width:1562px;height:1px;background:#dedede"></div><div style="position:absolute;left:0px;top:342.84px;width:21px;height:1px;background:#cfcfcf"></div><div style="position:absolute;left:21px;top:342.84px;width:1562px;height:1px;background:#dedede"></div><div style="position:absolute;left:0px;top:359.5px;width:21px;height:1px;background:#cfcfcf"></div><div style="position:absolute;left:21px;top:359.5px;width:1562px;height:1px;background:#dedede"></div><div style="position:absolute;left:0px;top:376.17px;width:21px;height:1px;background:#cfcfcf"></div><div style="position:absolute;left:21px;top:376.17px;width:1562px;height:1px;background:#dedede"></div><div style="position:absolute;left:0px;top:392.84px;width:21px;height:1px;background:#cfcfcf"></div><div style="position:absolute;left:21px;top:392.84px;width:1562px;height:1px;background:#dedede"></div><div style="position:absolute;left:0px;top:409.5px;width:21px;height:1px;background:#cfcfcf"></div><div style="position:absolute;left:21px;top:409.5px;width:1562px;height:1px;background:#dedede"></div><div style="position:absolute;left:0px;top:426.17px;width:21px;height:1px;background:#cfcfcf"></div><div style="position:absolute;left:21px;top:426.17px;width:1562px;height:1px;background:#dedede"></div><div style="position:absolute;left:0px;top:442.84px;width:21px;height:1px;background:#cfcfcf"></div><div style="position:absolute;left:21px;top:442.84px;width:1562px;height:1px;background:#dedede"></div><div style="position:absolute;left:0px;top:459.5px;width:21px;height:1px;background:#cfcfcf"></div><div style="position:absolute;left:21px;top:459.5px;width:1562px;height:1px;background:#dedede"></div><div style="position:absolute;left:0px;top:476.17px;width:21px;height:1px;background:#cfcfcf"></div><div style="position:absolute;left:21px;top:476.17px;width:1562px;height:1px;background:#dedede"></div><div style="position:absolute;left:0px;top:492.84px;width:21px;height:1px;background:#cfcfcf"></div><div style="position:absolute;left:21px;top:492.84px;width:1562px;height:1px;background:#dedede"></div><div style="position:absolute;left:0px;top:509.51px;width:21px;height:1px;background:#cfcfcf"></div><div style="position:absolute;left:21px;top:509.51px;width:1562px;height:1px;background:#dedede"></div><div style="position:absolute;left:0px;top:526.17px;width:21px;height:1px;background:#cfcfcf"></div><div style="position:absolute;left:21px;top:526.17px;width:1562px;height:1px;background:#dedede"></div><div style="position:absolute;left:0px;top:542.84px;width:21px;height:1px;background:#cfcfcf"></div><div style="position:absolute;left:21px;top:542.84px;width:1562px;height:1px;background:#dedede"></div><div style="position:absolute;left:0px;top:559.51px;width:21px;height:1px;background:#cfcfcf"></div><div style="position:absolute;left:21px;top:559.51px;width:1562px;height:1px;background:#dedede"></div><div style="position:absolute;left:0px;top:576.17px;width:21px;height:1px;background:#cfcfcf"></div><div style="position:absolute;left:21px;top:576.17px;width:1562px;height:1px;background:#dedede"></div><div style="position:absolute;left:0px;top:592.84px;width:21px;height:1px;background:#cfcfcf"></div><div style="position:absolute;left:21px;top:592.84px;width:1562px;height:1px;background:#dedede"></div><div style="position:absolute;left:0px;top:609.51px;width:21px;height:1px;background:#cfcfcf"></div><div style="position:absolute;left:21px;top:609.51px;width:1562px;height:1px;background:#dedede"></div><div style="position:absolute;left:0px;top:626.18px;width:21px;height:1px;background:#cfcfcf"></div><div style="position:absolute;left:21px;top:626.18px;width:1562px;height:1px;background:#dedede"></div><div style="position:absolute;left:0px;top:642.84px;width:21px;height:1px;background:#cfcfcf"></div><div style="position:absolute;left:21px;top:642.84px;width:1562px;height:1px;background:#dedede"></div><div style="position:absolute;left:0px;top:659.51px;width:21px;height:1px;background:#cfcfcf"></div><div style="position:absolute;left:21px;top:659.51px;width:1562px;height:1px;background:#dedede"></div><div style="position:absolute;left:0px;top:676.18px;width:21px;height:1px;background:#cfcfcf"></div><div style="position:absolute;left:21px;top:676.18px;width:1562px;height:1px;background:#dedede"></div><div style="position:absolute;left:0px;top:692.84px;width:21px;height:1px;background:#cfcfcf"></div><div style="position:absolute;left:21px;top:692.84px;width:1562px;height:1px;background:#dedede"></div><div style="position:absolute;left:0px;top:709.51px;width:21px;height:1px;background:#cfcfcf"></div><div style="position:absolute;left:21px;top:709.51px;width:1562px;height:1px;background:#dedede"></div><div style="position:absolute;left:0px;top:726.18px;width:21px;height:1px;background:#cfcfcf"></div><div style="position:absolute;left:21px;top:726.18px;width:1562px;height:1px;background:#dedede"></div><div style="position:absolute;left:0px;top:742.84px;width:21px;height:1px;background:#cfcfcf"></div><div style="position:absolute;left:21px;top:742.84px;width:1562px;height:1px;background:#dedede"></div><div style="position:absolute;left:0px;top:759.51px;width:21px;height:1px;background:#cfcfcf"></div><div style="position:absolute;left:21px;top:759.51px;width:1562px;height:1px;background:#dedede"></div><div style="position:absolute;left:0px;top:776.18px;width:21px;height:1px;background:#cfcfcf"></div><div style="position:absolute;left:21px;top:776.18px;width:1562px;height:1px;background:#dedede"></div><div style="position:absolute;left:0px;top:792.85px;width:21px;height:1px;background:#cfcfcf"></div><div style="position:absolute;left:21px;top:792.85px;width:1562px;height:1px;background:#dedede"></div><div style="position:absolute;left:0px;top:809.51px;width:21px;height:1px;background:#cfcfcf"></div><div style="position:absolute;left:21px;top:809.51px;width:1562px;height:1px;background:#dedede"></div><div style="position:absolute;left:0px;top:826.18px;width:21px;height:1px;background:#cfcfcf"></div><div style="position:absolute;left:21px;top:826.18px;width:1562px;height:1px;background:#dedede"></div><div style="position:absolute;left:74.32px;top:226.17px;width:1px;height:33.33px;background:#dedede"></div><div style="position:absolute;left:74.32px;top:292.84px;width:1px;height:16.67px;background:#dedede"></div><div style="position:absolute;left:74.32px;top:392.84px;width:1px;height:50.0px;background:#dedede"></div><div style="position:absolute;left:74.32px;top:476.17px;width:1px;height:50.0px;background:#dedede"></div><div style="position:absolute;left:74.32px;top:559.51px;width:1px;height:50.0px;background:#dedede"></div><div style="position:absolute;left:74.32px;top:642.84px;width:1px;height:50.0px;background:#dedede"></div><div style="position:absolute;left:74.32px;top:726.18px;width:1px;height:100.0px;background:#dedede"></div><div style="position:absolute;left:127.64px;top:209.5px;width:1px;height:616.68px;background:#dedede"></div><div style="position:absolute;left:180.96px;top:209.5px;width:1px;height:616.68px;background:#dedede"></div><div style="position:absolute;left:234.28px;top:209.5px;width:1px;height:616.68px;background:#dedede"></div><div style="position:absolute;left:287.6px;top:209.5px;width:1px;height:616.68px;background:#dedede"></div><div style="position:absolute;left:340.92px;top:209.5px;width:1px;height:616.68px;background:#dedede"></div><div style="position:absolute;left:394.24px;top:209.5px;width:1px;height:616.68px;background:#dedede"></div><div style="position:absolute;left:447.56px;top:209.5px;width:1px;height:616.68px;background:#dedede"></div><div style="position:absolute;left:500.88px;top:209.5px;width:1px;height:616.68px;background:#dedede"></div><div style="position:absolute;left:554.2px;top:209.5px;width:1px;height:616.68px;background:#dedede"></div><div style="position:absolute;left:607.52px;top:209.5px;width:1px;height:616.68px;background:#dedede"></div><div style="position:absolute;left:660.84px;top:209.5px;width:1px;height:616.68px;background:#dedede"></div><div style="position:absolute;left:714.16px;top:209.5px;width:1px;height:616.68px;background:#dedede"></div><div style="position:absolute;left:767.48px;top:209.5px;width:1px;height:616.68px;background:#dedede"></div><div style="position:absolute;left:820.8px;top:209.5px;width:1px;height:616.68px;background:#dedede"></div><div style="position:absolute;left:874.12px;top:209.5px;width:1px;height:616.68px;background:#dedede"></div><div style="position:absolute;left:927.44px;top:209.5px;width:1px;height:616.68px;background:#dedede"></div><div style="position:absolute;left:980.76px;top:209.5px;width:1px;height:616.68px;background:#dedede"></div><div style="position:absolute;left:1034.08px;top:209.5px;width:1px;height:616.68px;background:#dedede"></div><div style="position:absolute;left:1087.4px;top:209.5px;width:1px;height:616.68px;background:#dedede"></div><div style="position:absolute;left:1140.72px;top:209.5px;width:1px;height:616.68px;background:#dedede"></div><div style="position:absolute;left:1194.04px;top:209.5px;width:1px;height:616.68px;background:#dedede"></div><div style="position:absolute;left:1247.36px;top:209.5px;width:1px;height:616.68px;background:#dedede"></div><div style="position:absolute;left:1300.68px;top:209.5px;width:1px;height:616.68px;background:#dedede"></div><div style="position:absolute;left:1354.0px;top:209.5px;width:1px;height:616.68px;background:#dedede"></div><div style="position:absolute;left:1407.32px;top:209.5px;width:1px;height:616.68px;background:#dedede"></div><div style="position:absolute;left:1460.64px;top:209.5px;width:1px;height:616.68px;background:#dedede"></div><div style="position:absolute;left:1513.96px;top:209.5px;width:1px;height:616.68px;background:#dedede"></div><div style="position:absolute;left:1567.28px;top:209.5px;width:1px;height:616.68px;background:#dedede"></div><div style="position:absolute;left:21px;top:210px;width:1px;height:616px;background:#c9c9c9"></div><div style="position:absolute;left:0;top:213.30px;left:1px;width:21px;text-align:center;font:10.8px 'Liberation Sans', sans-serif;color:#333">16</div><div style="position:absolute;left:0;top:229.97px;left:1px;width:21px;text-align:center;font:10.8px 'Liberation Sans', sans-serif;color:#333">17</div><div style="position:absolute;left:0;top:246.63px;left:1px;width:21px;text-align:center;font:10.8px 'Liberation Sans', sans-serif;color:#333">18</div><div style="position:absolute;left:0;top:263.30px;left:1px;width:21px;text-align:center;font:10.8px 'Liberation Sans', sans-serif;color:#333">19</div><div style="position:absolute;left:0;top:279.97px;left:1px;width:21px;text-align:center;font:10.8px 'Liberation Sans', sans-serif;color:#333">20</div><div style="position:absolute;left:0;top:296.64px;left:1px;width:21px;text-align:center;font:10.8px 'Liberation Sans', sans-serif;color:#333">21</div><div style="position:absolute;left:0;top:313.30px;left:1px;width:21px;text-align:center;font:10.8px 'Liberation Sans', sans-serif;color:#333">22</div><div style="position:absolute;left:0;top:329.97px;left:1px;width:21px;text-align:center;font:10.8px 'Liberation Sans', sans-serif;color:#333">23</div><div style="position:absolute;left:0;top:346.64px;left:1px;width:21px;text-align:center;font:10.8px 'Liberation Sans', sans-serif;color:#333">24</div><div style="position:absolute;left:0;top:363.30px;left:1px;width:21px;text-align:center;font:10.8px 'Liberation Sans', sans-serif;color:#333">25</div><div style="position:absolute;left:0;top:379.97px;left:1px;width:21px;text-align:center;font:10.8px 'Liberation Sans', sans-serif;color:#333">26</div><div style="position:absolute;left:0;top:396.64px;left:1px;width:21px;text-align:center;font:10.8px 'Liberation Sans', sans-serif;color:#333">27</div><div style="position:absolute;left:0;top:413.30px;left:1px;width:21px;text-align:center;font:10.8px 'Liberation Sans', sans-serif;color:#333">28</div><div style="position:absolute;left:0;top:429.97px;left:1px;width:21px;text-align:center;font:10.8px 'Liberation Sans', sans-serif;color:#333">29</div><div style="position:absolute;left:0;top:446.64px;left:1px;width:21px;text-align:center;font:10.8px 'Liberation Sans', sans-serif;color:#333">30</div><div style="position:absolute;left:0;top:463.31px;left:1px;width:21px;text-align:center;font:10.8px 'Liberation Sans', sans-serif;color:#333">31</div><div style="position:absolute;left:0;top:479.97px;left:1px;width:21px;text-align:center;font:10.8px 'Liberation Sans', sans-serif;color:#333">32</div><div style="position:absolute;left:0;top:496.64px;left:1px;width:21px;text-align:center;font:10.8px 'Liberation Sans', sans-serif;color:#333">33</div><div style="position:absolute;left:0;top:513.31px;left:1px;width:21px;text-align:center;font:10.8px 'Liberation Sans', sans-serif;color:#333">34</div><div style="position:absolute;left:0;top:529.97px;left:1px;width:21px;text-align:center;font:10.8px 'Liberation Sans', sans-serif;color:#333">35</div><div style="position:absolute;left:0;top:546.64px;left:1px;width:21px;text-align:center;font:10.8px 'Liberation Sans', sans-serif;color:#333">36</div><div style="position:absolute;left:0;top:563.31px;left:1px;width:21px;text-align:center;font:10.8px 'Liberation Sans', sans-serif;color:#333">37</div><div style="position:absolute;left:0;top:579.97px;left:1px;width:21px;text-align:center;font:10.8px 'Liberation Sans', sans-serif;color:#333">38</div><div style="position:absolute;left:0;top:596.64px;left:1px;width:21px;text-align:center;font:10.8px 'Liberation Sans', sans-serif;color:#333">39</div><div style="position:absolute;left:0;top:613.31px;left:1px;width:21px;text-align:center;font:10.8px 'Liberation Sans', sans-serif;color:#333">40</div><div style="position:absolute;left:0;top:629.98px;left:1px;width:21px;text-align:center;font:10.8px 'Liberation Sans', sans-serif;color:#333">41</div><div style="position:absolute;left:0;top:646.64px;left:1px;width:21px;text-align:center;font:10.8px 'Liberation Sans', sans-serif;color:#333">42</div><div style="position:absolute;left:0;top:663.31px;left:1px;width:21px;text-align:center;font:10.8px 'Liberation Sans', sans-serif;color:#333">43</div><div style="position:absolute;left:0;top:679.98px;left:1px;width:21px;text-align:center;font:10.8px 'Liberation Sans', sans-serif;color:#333">44</div><div style="position:absolute;left:0;top:696.64px;left:1px;width:21px;text-align:center;font:10.8px 'Liberation Sans', sans-serif;color:#333">45</div><div style="position:absolute;left:0;top:713.31px;left:1px;width:21px;text-align:center;font:10.8px 'Liberation Sans', sans-serif;color:#333">46</div><div style="position:absolute;left:0;top:729.98px;left:1px;width:21px;text-align:center;font:10.8px 'Liberation Sans', sans-serif;color:#333">47</div><div style="position:absolute;left:0;top:746.64px;left:1px;width:21px;text-align:center;font:10.8px 'Liberation Sans', sans-serif;color:#333">48</div><div style="position:absolute;left:0;top:763.31px;left:1px;width:21px;text-align:center;font:10.8px 'Liberation Sans', sans-serif;color:#333">49</div><div style="position:absolute;left:0;top:779.98px;left:1px;width:21px;text-align:center;font:10.8px 'Liberation Sans', sans-serif;color:#333">50</div><div style="position:absolute;left:0;top:796.64px;left:1px;width:21px;text-align:center;font:10.8px 'Liberation Sans', sans-serif;color:#333">51</div><div style="position:absolute;left:0;top:813.31px;left:1px;width:21px;text-align:center;font:10.8px 'Liberation Sans', sans-serif;color:#333">52</div><div class="c l" style="left:21.00px;top:213.10px;width:106.64px;letter-spacing:0.05px">Set channel</div><div class="c l" style="left:21.00px;top:229.77px;width:53.02px;letter-spacing:0.03px">Channel</div><div class="c l" style="left:127.64px;top:229.77px;width:53.02px;letter-spacing:-0.46px">1)TH_CH1</div><div class="c l" style="left:180.96px;top:229.77px;width:53.02px;letter-spacing:-0.46px">1)TH_CH2</div><div class="c l" style="left:234.28px;top:229.77px;width:53.02px;letter-spacing:-0.46px">1)TH_CH3</div><div class="c l" style="left:287.60px;top:229.77px;width:53.02px;letter-spacing:-0.46px">1)TH_CH4</div><div class="c l" style="left:340.92px;top:229.77px;width:53.02px;letter-spacing:-0.46px">1)TH_CH5</div><div class="c l" style="left:394.24px;top:229.77px;width:53.02px;letter-spacing:-0.46px">1)TH_CH6</div><div class="c l" style="left:447.56px;top:229.77px;width:53.02px;letter-spacing:-0.46px">1)TH_CH7</div><div class="c l" style="left:500.88px;top:229.77px;width:53.02px;letter-spacing:-0.46px">1)TH_CH8</div><div class="c l" style="left:554.20px;top:229.77px;width:53.02px;letter-spacing:-0.46px">2)TH_CH1</div><div class="c l" style="left:607.52px;top:229.77px;width:53.02px;letter-spacing:-0.46px">2)TH_CH2</div><div class="c l" style="left:660.84px;top:229.77px;width:53.02px;letter-spacing:-0.46px">2)TH_CH3</div><div class="c l" style="left:714.16px;top:229.77px;width:53.02px;letter-spacing:-0.46px">2)TH_CH4</div><div class="c l" style="left:767.48px;top:229.77px;width:53.02px;letter-spacing:-0.46px">2)TH_CH5</div><div class="c l" style="left:820.80px;top:229.77px;width:53.02px;letter-spacing:-0.46px">2)TH_CH6</div><div class="c l" style="left:874.12px;top:229.77px;width:53.02px;letter-spacing:-0.46px">2)TH_CH7</div><div class="c l" style="left:927.44px;top:229.77px;width:53.02px;letter-spacing:-0.46px">2)TH_CH8</div><div class="c l" style="left:980.76px;top:229.77px;width:53.02px;letter-spacing:-0.46px">3)TH_CH1</div><div class="c l" style="left:1034.08px;top:229.77px;width:53.02px;letter-spacing:-0.46px">3)TH_CH2</div><div class="c l" style="left:1087.40px;top:229.77px;width:53.02px;letter-spacing:-0.46px">3)TH_CH3</div><div class="c l" style="left:1140.72px;top:229.77px;width:53.02px;letter-spacing:-0.46px">3)TH_CH4</div><div class="c l" style="left:1194.04px;top:229.77px;width:53.02px;letter-spacing:-0.46px">3)TH_CH5</div><div class="c l" style="left:1247.36px;top:229.77px;width:53.02px;letter-spacing:-0.46px">3)TH_CH6</div><div class="c l" style="left:1300.68px;top:229.77px;width:53.02px;letter-spacing:-0.46px">3)TH_CH7</div><div class="c l" style="left:1354.00px;top:229.77px;width:53.02px;letter-spacing:-0.46px">3)TH_CH8</div><div class="c l" style="left:1407.32px;top:229.77px;width:53.02px;letter-spacing:-0.46px">4)TH_CH1</div><div class="c l" style="left:1460.64px;top:229.77px;width:53.02px;letter-spacing:-0.46px">4)TH_CH2</div><div class="c l" style="left:1513.96px;top:229.77px;width:53.02px;letter-spacing:-0.46px">4)TH_CH3</div><div class="c l" style="left:1567.28px;top:229.77px;width:15.72px;letter-spacing:-0.46px">4)TH_CH4</div><div class="c l" style="left:21.00px;top:246.43px;width:53.02px;letter-spacing:-0.15px">CH Name</div><div class="c l" style="left:127.64px;top:246.43px;width:53.02px;letter-spacing:-0.19px">Cyl Zon 1 :OUT</div><div class="c l" style="left:180.96px;top:246.43px;width:53.02px;letter-spacing:-0.19px">Cyl Zon 2 :OUT</div><div class="c l" style="left:234.28px;top:246.43px;width:53.02px;letter-spacing:-0.19px">Cyl Zon 3 :OUT</div><div class="c l" style="left:287.60px;top:246.43px;width:53.02px;letter-spacing:-0.19px">Cyl Zon 4 :OUT</div><div class="c l" style="left:340.92px;top:246.43px;width:53.02px;letter-spacing:-0.35px">Neck 150EX</div><div class="c l" style="left:394.24px;top:246.43px;width:53.02px;letter-spacing:-0.34px">Head 150EX</div><div class="c l" style="left:447.56px;top:246.43px;width:53.02px;letter-spacing:-0.37px">Die 150EX</div><div class="c l" style="left:500.88px;top:246.43px;width:53.02px;letter-spacing:-0.15px">Cyl Zon 1 IN</div><div class="c l" style="left:554.20px;top:246.43px;width:53.02px;letter-spacing:-0.15px">Cyl Zon 2 IN</div><div class="c l" style="left:607.52px;top:246.43px;width:53.02px;letter-spacing:-0.15px">Cyl Zon 3 IN</div><div class="c l" style="left:660.84px;top:246.43px;width:53.02px;letter-spacing:-0.15px">Cyl Zon 4 IN</div><div class="c l" style="left:714.16px;top:246.43px;width:53.02px;letter-spacing:-0.04px">Neck 2 In (</div><div class="c l" style="left:767.48px;top:246.43px;width:53.02px;letter-spacing:-0.20px">Cyl Zon 1 (OUT</div><div class="c l" style="left:820.80px;top:246.43px;width:53.02px;letter-spacing:-0.20px">Cyl Zon 2 (OUT</div><div class="c l" style="left:874.12px;top:246.43px;width:53.02px;letter-spacing:-0.20px">Cyl Zon 3 (OUT</div><div class="c l" style="left:927.44px;top:246.43px;width:53.02px;letter-spacing:-0.20px">Cyl Zon 4 (OUT</div><div class="c l" style="left:980.76px;top:246.43px;width:53.02px;letter-spacing:0.04px">Neck 3 Out</div><div class="c l" style="left:1034.08px;top:246.43px;width:53.02px;letter-spacing:0.07px">Nozzle Out</div><div class="c l" style="left:1087.40px;top:246.43px;width:53.02px;letter-spacing:0.09px">CL Water</div><div class="c l" style="left:1140.72px;top:246.43px;width:53.02px;letter-spacing:-0.10px">Zone 1</div><div class="c l" style="left:1194.04px;top:246.43px;width:53.02px;letter-spacing:-0.10px">Zone 2</div><div class="c l" style="left:1247.36px;top:246.43px;width:53.02px;letter-spacing:-0.10px">Zone 3</div><div class="c l" style="left:1300.68px;top:246.43px;width:53.02px;letter-spacing:-0.10px">Zone 4</div><div class="c l" style="left:1354.00px;top:246.43px;width:53.02px;letter-spacing:-0.10px">Zone 5</div><div class="c l" style="left:1407.32px;top:246.43px;width:53.02px;letter-spacing:-0.10px">Zone 6</div><div class="c l" style="left:1460.64px;top:246.43px;width:53.02px;letter-spacing:-0.10px">Line Speed</div><div class="c l" style="left:1513.96px;top:246.43px;width:53.02px;letter-spacing:-0.85px">SAG</div><div class="c l" style="left:1567.28px;top:246.43px;width:15.72px;letter-spacing:0.30px">Nip</div><div class="c l" style="left:21.00px;top:263.10px;width:106.64px;letter-spacing:0.09px">Input Range</div><div class="c l" style="left:127.64px;top:263.10px;width:53.02px;letter-spacing:0.26px">J-thermocouple</div><div class="c l" style="left:180.96px;top:263.10px;width:53.02px;letter-spacing:0.26px">J-thermocouple</div><div class="c l" style="left:234.28px;top:263.10px;width:53.02px;letter-spacing:0.26px">J-thermocouple</div><div class="c l" style="left:287.60px;top:263.10px;width:53.02px;letter-spacing:0.26px">J-thermocouple</div><div class="c l" style="left:340.92px;top:263.10px;width:53.02px;letter-spacing:0.26px">J-thermocouple</div><div class="c l" style="left:394.24px;top:263.10px;width:53.02px;letter-spacing:0.26px">J-thermocouple</div><div class="c l" style="left:447.56px;top:263.10px;width:53.02px;letter-spacing:0.26px">J-thermocouple</div><div class="c l" style="left:500.88px;top:263.10px;width:53.02px;letter-spacing:0.26px">J-thermocouple</div><div class="c l" style="left:554.20px;top:263.10px;width:53.02px;letter-spacing:0.26px">J-thermocouple</div><div class="c l" style="left:607.52px;top:263.10px;width:53.02px;letter-spacing:0.26px">J-thermocouple</div><div class="c l" style="left:660.84px;top:263.10px;width:53.02px;letter-spacing:0.26px">J-thermocouple</div><div class="c l" style="left:714.16px;top:263.10px;width:53.02px;letter-spacing:0.26px">J-thermocouple</div><div class="c l" style="left:767.48px;top:263.10px;width:53.02px;letter-spacing:0.26px">J-thermocouple</div><div class="c l" style="left:820.80px;top:263.10px;width:53.02px;letter-spacing:0.26px">J-thermocouple</div><div class="c l" style="left:874.12px;top:263.10px;width:53.02px;letter-spacing:0.26px">J-thermocouple</div><div class="c l" style="left:927.44px;top:263.10px;width:53.02px;letter-spacing:0.26px">J-thermocouple</div><div class="c l" style="left:980.76px;top:263.10px;width:53.02px;letter-spacing:0.26px">J-thermocouple</div><div class="c l" style="left:1034.08px;top:263.10px;width:53.02px;letter-spacing:0.26px">J-thermocouple</div><div class="c l" style="left:1087.40px;top:263.10px;width:53.02px;letter-spacing:0.26px">J-thermocouple</div><div class="c l" style="left:1140.72px;top:263.10px;width:53.02px;letter-spacing:0.26px">J-thermocouple</div><div class="c l" style="left:1194.04px;top:263.10px;width:53.02px;letter-spacing:0.26px">J-thermocouple</div><div class="c l" style="left:1247.36px;top:263.10px;width:53.02px;letter-spacing:0.26px">J-thermocouple</div><div class="c l" style="left:1300.68px;top:263.10px;width:53.02px;letter-spacing:0.26px">J-thermocouple</div><div class="c l" style="left:1354.00px;top:263.10px;width:53.02px;letter-spacing:0.26px">J-thermocouple</div><div class="c l" style="left:1407.32px;top:263.10px;width:53.02px;letter-spacing:0.26px">J-thermocouple</div><div class="c l" style="left:1460.64px;top:263.10px;width:53.02px;letter-spacing:-0.18px">±10V</div><div class="c l" style="left:1513.96px;top:263.10px;width:53.02px;letter-spacing:-0.18px">±10V</div><div class="c l" style="left:1567.28px;top:263.10px;width:15.72px;letter-spacing:-0.22px">1-5V</div><div class="c l" style="left:21.00px;top:279.77px;width:106.64px;letter-spacing:0.22px">Decml pnt No</div><div class="c r" style="left:127.64px;top:279.77px;width:53.02px;letter-spacing:-0.36px;padding-right:1.66px">1</div><div class="c r" style="left:180.96px;top:279.77px;width:53.02px;letter-spacing:-0.36px;padding-right:1.66px">1</div><div class="c r" style="left:234.28px;top:279.77px;width:53.02px;letter-spacing:-0.36px;padding-right:1.66px">1</div><div class="c r" style="left:287.60px;top:279.77px;width:53.02px;letter-spacing:-0.36px;padding-right:1.66px">1</div><div class="c r" style="left:340.92px;top:279.77px;width:53.02px;letter-spacing:-0.36px;padding-right:1.66px">1</div><div class="c r" style="left:394.24px;top:279.77px;width:53.02px;letter-spacing:-0.36px;padding-right:1.66px">2</div><div class="c r" style="left:447.56px;top:279.77px;width:53.02px;letter-spacing:-0.36px;padding-right:1.66px">2</div><div class="c r" style="left:500.88px;top:279.77px;width:53.02px;letter-spacing:-0.36px;padding-right:1.66px">2</div><div class="c r" style="left:554.20px;top:279.77px;width:53.02px;letter-spacing:-0.36px;padding-right:1.66px">2</div><div class="c r" style="left:607.52px;top:279.77px;width:53.02px;letter-spacing:-0.36px;padding-right:1.66px">2</div><div class="c r" style="left:660.84px;top:279.77px;width:53.02px;letter-spacing:-0.36px;padding-right:1.66px">2</div><div class="c r" style="left:714.16px;top:279.77px;width:53.02px;letter-spacing:-0.36px;padding-right:1.66px">2</div><div class="c r" style="left:767.48px;top:279.77px;width:53.02px;letter-spacing:-0.36px;padding-right:1.66px">2</div><div class="c r" style="left:820.80px;top:279.77px;width:53.02px;letter-spacing:-0.36px;padding-right:1.66px">2</div><div class="c r" style="left:874.12px;top:279.77px;width:53.02px;letter-spacing:-0.36px;padding-right:1.66px">2</div><div class="c r" style="left:927.44px;top:279.77px;width:53.02px;letter-spacing:-0.36px;padding-right:1.66px">2</div><div class="c r" style="left:980.76px;top:279.77px;width:53.02px;letter-spacing:-0.36px;padding-right:1.66px">2</div><div class="c r" style="left:1034.08px;top:279.77px;width:53.02px;letter-spacing:-0.36px;padding-right:1.66px">2</div><div class="c r" style="left:1087.40px;top:279.77px;width:53.02px;letter-spacing:-0.36px;padding-right:1.66px">2</div><div class="c r" style="left:1140.72px;top:279.77px;width:53.02px;letter-spacing:-0.36px;padding-right:1.66px">2</div><div class="c r" style="left:1194.04px;top:279.77px;width:53.02px;letter-spacing:-0.36px;padding-right:1.66px">2</div><div class="c r" style="left:1247.36px;top:279.77px;width:53.02px;letter-spacing:-0.36px;padding-right:1.66px">2</div><div class="c r" style="left:1300.68px;top:279.77px;width:53.02px;letter-spacing:-0.36px;padding-right:1.66px">2</div><div class="c r" style="left:1354.00px;top:279.77px;width:53.02px;letter-spacing:-0.36px;padding-right:1.66px">2</div><div class="c r" style="left:1407.32px;top:279.77px;width:53.02px;letter-spacing:-0.36px;padding-right:1.66px">2</div><div class="c r" style="left:1460.64px;top:279.77px;width:53.02px;letter-spacing:-0.36px;padding-right:1.66px">3</div><div class="c r" style="left:1513.96px;top:279.77px;width:53.02px;letter-spacing:-0.36px;padding-right:1.66px">3</div><div class="c l" style="left:21.00px;top:296.44px;width:53.02px;letter-spacing:0.50px">Unit</div><div class="c l" style="left:127.64px;top:296.44px;width:53.02px;letter-spacing:-0.82px">°C</div><div class="c l" style="left:180.96px;top:296.44px;width:53.02px;letter-spacing:-0.82px">°C</div><div class="c l" style="left:234.28px;top:296.44px;width:53.02px;letter-spacing:-0.82px">°C</div><div class="c l" style="left:287.60px;top:296.44px;width:53.02px;letter-spacing:-0.82px">°C</div><div class="c l" style="left:340.92px;top:296.44px;width:53.02px;letter-spacing:-0.82px">°C</div><div class="c l" style="left:394.24px;top:296.44px;width:53.02px;letter-spacing:-0.82px">°C</div><div class="c l" style="left:447.56px;top:296.44px;width:53.02px;letter-spacing:-0.82px">°C</div><div class="c l" style="left:500.88px;top:296.44px;width:53.02px;letter-spacing:-0.82px">°C</div><div class="c l" style="left:554.20px;top:296.44px;width:53.02px;letter-spacing:-0.82px">°C</div><div class="c l" style="left:607.52px;top:296.44px;width:53.02px;letter-spacing:-0.82px">°C</div><div class="c l" style="left:660.84px;top:296.44px;width:53.02px;letter-spacing:-0.82px">°C</div><div class="c l" style="left:714.16px;top:296.44px;width:53.02px;letter-spacing:-0.82px">°C</div><div class="c l" style="left:767.48px;top:296.44px;width:53.02px;letter-spacing:-0.82px">°C</div><div class="c l" style="left:820.80px;top:296.44px;width:53.02px;letter-spacing:-0.82px">°C</div><div class="c l" style="left:874.12px;top:296.44px;width:53.02px;letter-spacing:-0.82px">°C</div><div class="c l" style="left:927.44px;top:296.44px;width:53.02px;letter-spacing:-0.82px">°C</div><div class="c l" style="left:980.76px;top:296.44px;width:53.02px;letter-spacing:-0.82px">°C</div><div class="c l" style="left:1034.08px;top:296.44px;width:53.02px;letter-spacing:-0.82px">°C</div><div class="c l" style="left:1087.40px;top:296.44px;width:53.02px;letter-spacing:-0.82px">°C</div><div class="c l" style="left:1140.72px;top:296.44px;width:53.02px;letter-spacing:-0.82px">°C</div><div class="c l" style="left:1194.04px;top:296.44px;width:53.02px;letter-spacing:-0.82px">°C</div><div class="c l" style="left:1247.36px;top:296.44px;width:53.02px;letter-spacing:-0.82px">°C</div><div class="c l" style="left:1300.68px;top:296.44px;width:53.02px;letter-spacing:-0.82px">°C</div><div class="c l" style="left:1354.00px;top:296.44px;width:53.02px;letter-spacing:-0.82px">°C</div><div class="c l" style="left:1407.32px;top:296.44px;width:53.02px;letter-spacing:-0.82px">°C</div><div class="c l" style="left:1460.64px;top:296.44px;width:53.02px;letter-spacing:0.60px">M/Min</div><div class="c l" style="left:1513.96px;top:296.44px;width:53.02px;letter-spacing:-0.90px">%</div><div class="c l" style="left:1567.28px;top:296.44px;width:15.72px;letter-spacing:-0.59px">Kg</div><div class="c l" style="left:21.00px;top:313.10px;width:106.64px;letter-spacing:0.39px">Measurement</div><div class="c l" style="left:127.64px;top:313.10px;width:53.02px;letter-spacing:-0.16px">Scaling</div><div class="c l" style="left:180.96px;top:313.10px;width:53.02px;letter-spacing:-0.16px">Scaling</div><div class="c l" style="left:234.28px;top:313.10px;width:53.02px;letter-spacing:-0.16px">Scaling</div><div class="c l" style="left:287.60px;top:313.10px;width:53.02px;letter-spacing:-0.16px">Scaling</div><div class="c l" style="left:340.92px;top:313.10px;width:53.02px;letter-spacing:-0.16px">Scaling</div><div class="c l" style="left:394.24px;top:313.10px;width:53.02px;letter-spacing:-0.16px">Scaling</div><div class="c l" style="left:447.56px;top:313.10px;width:53.02px;letter-spacing:-0.16px">Scaling</div><div class="c l" style="left:500.88px;top:313.10px;width:53.02px;letter-spacing:-0.80px">OFF</div><div class="c l" style="left:554.20px;top:313.10px;width:53.02px;letter-spacing:-0.80px">OFF</div><div class="c l" style="left:607.52px;top:313.10px;width:53.02px;letter-spacing:-0.80px">OFF</div><div class="c l" style="left:660.84px;top:313.10px;width:53.02px;letter-spacing:-0.80px">OFF</div><div class="c l" style="left:714.16px;top:313.10px;width:53.02px;letter-spacing:-0.16px">Scaling</div><div class="c l" style="left:767.48px;top:313.10px;width:53.02px;letter-spacing:-0.16px">Scaling</div><div class="c l" style="left:820.80px;top:313.10px;width:53.02px;letter-spacing:-0.80px">OFF</div><div class="c l" style="left:874.12px;top:313.10px;width:53.02px;letter-spacing:-0.80px">OFF</div><div class="c l" style="left:927.44px;top:313.10px;width:53.02px;letter-spacing:-0.80px">OFF</div><div class="c l" style="left:980.76px;top:313.10px;width:53.02px;letter-spacing:-0.16px">Scaling</div><div class="c l" style="left:1034.08px;top:313.10px;width:53.02px;letter-spacing:-0.16px">Scaling</div><div class="c l" style="left:1087.40px;top:313.10px;width:53.02px;letter-spacing:-0.80px">OFF</div><div class="c l" style="left:1140.72px;top:313.10px;width:53.02px;letter-spacing:-0.16px">Scaling</div><div class="c l" style="left:1194.04px;top:313.10px;width:53.02px;letter-spacing:-0.16px">Scaling</div><div class="c l" style="left:1247.36px;top:313.10px;width:53.02px;letter-spacing:-0.16px">Scaling</div><div class="c l" style="left:1300.68px;top:313.10px;width:53.02px;letter-spacing:-0.16px">Scaling</div><div class="c l" style="left:1354.00px;top:313.10px;width:53.02px;letter-spacing:-0.16px">Scaling</div><div class="c l" style="left:1407.32px;top:313.10px;width:53.02px;letter-spacing:-0.16px">Scaling</div><div class="c l" style="left:1460.64px;top:313.10px;width:53.02px;letter-spacing:-0.16px">Scaling</div><div class="c l" style="left:1513.96px;top:313.10px;width:53.02px;letter-spacing:-0.16px">Scaling</div><div class="c l" style="left:1567.28px;top:313.10px;width:15.72px;letter-spacing:-0.16px">Scaling</div><div class="c l" style="left:21.00px;top:329.77px;width:106.64px;letter-spacing:0.15px">Acquired Value 1</div><div class="c r" style="left:127.64px;top:329.77px;width:53.02px;letter-spacing:-0.36px;padding-right:1.66px">1</div><div class="c r" style="left:180.96px;top:329.77px;width:53.02px;letter-spacing:-0.36px;padding-right:1.66px">1</div><div class="c r" style="left:234.28px;top:329.77px;width:53.02px;letter-spacing:-0.36px;padding-right:1.66px">1</div><div class="c r" style="left:287.60px;top:329.77px;width:53.02px;letter-spacing:-0.36px;padding-right:1.66px">1</div><div class="c r" style="left:340.92px;top:329.77px;width:53.02px;letter-spacing:-0.36px;padding-right:1.66px">1</div><div class="c r" style="left:394.24px;top:329.77px;width:53.02px;letter-spacing:-0.36px;padding-right:1.66px">1</div><div class="c r" style="left:447.56px;top:329.77px;width:53.02px;letter-spacing:-0.36px;padding-right:1.66px">1</div><div class="c r" style="left:714.16px;top:329.77px;width:53.02px;letter-spacing:-0.36px;padding-right:1.66px">1</div><div class="c r" style="left:767.48px;top:329.77px;width:53.02px;letter-spacing:-0.36px;padding-right:1.66px">1</div><div class="c r" style="left:980.76px;top:329.77px;width:53.02px;letter-spacing:-0.36px;padding-right:1.66px">1</div><div class="c r" style="left:1034.08px;top:329.77px;width:53.02px;letter-spacing:-0.36px;padding-right:1.66px">1</div><div class="c r" style="left:1140.72px;top:329.77px;width:53.02px;letter-spacing:-0.36px;padding-right:1.66px">1</div><div class="c r" style="left:1194.04px;top:329.77px;width:53.02px;letter-spacing:-0.36px;padding-right:1.66px">1</div><div class="c r" style="left:1247.36px;top:329.77px;width:53.02px;letter-spacing:-0.36px;padding-right:1.66px">1</div><div class="c r" style="left:1300.68px;top:329.77px;width:53.02px;letter-spacing:-0.36px;padding-right:1.66px">1</div><div class="c r" style="left:1354.00px;top:329.77px;width:53.02px;letter-spacing:-0.36px;padding-right:1.66px">1</div><div class="c r" style="left:1407.32px;top:329.77px;width:53.02px;letter-spacing:-0.36px;padding-right:1.66px">1</div><div class="c r" style="left:1460.64px;top:329.77px;width:53.02px;letter-spacing:-0.36px;padding-right:1.66px">10</div><div class="c r" style="left:1513.96px;top:329.77px;width:53.02px;letter-spacing:-0.36px;padding-right:1.66px">1</div><div class="c l" style="left:21.00px;top:346.44px;width:106.64px;letter-spacing:0.15px">Acquired Value 2</div><div class="c r" style="left:127.64px;top:346.44px;width:53.02px;letter-spacing:-0.11px;padding-right:1.41px">-1</div><div class="c r" style="left:180.96px;top:346.44px;width:53.02px;letter-spacing:-0.11px;padding-right:1.41px">-1</div><div class="c r" style="left:234.28px;top:346.44px;width:53.02px;letter-spacing:-0.11px;padding-right:1.41px">-1</div><div class="c r" style="left:287.60px;top:346.44px;width:53.02px;letter-spacing:-0.11px;padding-right:1.41px">-1</div><div class="c r" style="left:340.92px;top:346.44px;width:53.02px;letter-spacing:-0.11px;padding-right:1.41px">-1</div><div class="c r" style="left:394.24px;top:346.44px;width:53.02px;letter-spacing:-0.11px;padding-right:1.41px">-1</div><div class="c r" style="left:447.56px;top:346.44px;width:53.02px;letter-spacing:-0.11px;padding-right:1.41px">-1</div><div class="c r" style="left:714.16px;top:346.44px;width:53.02px;letter-spacing:-0.11px;padding-right:1.41px">-1</div><div class="c r" style="left:767.48px;top:346.44px;width:53.02px;letter-spacing:-0.11px;padding-right:1.41px">-1</div><div class="c r" style="left:980.76px;top:346.44px;width:53.02px;letter-spacing:-0.11px;padding-right:1.41px">-1</div><div class="c r" style="left:1034.08px;top:346.44px;width:53.02px;letter-spacing:-0.11px;padding-right:1.41px">-1</div><div class="c r" style="left:1140.72px;top:346.44px;width:53.02px;letter-spacing:-0.11px;padding-right:1.41px">-1</div><div class="c r" style="left:1194.04px;top:346.44px;width:53.02px;letter-spacing:-0.11px;padding-right:1.41px">-1</div><div class="c r" style="left:1247.36px;top:346.44px;width:53.02px;letter-spacing:-0.11px;padding-right:1.41px">-1</div><div class="c r" style="left:1300.68px;top:346.44px;width:53.02px;letter-spacing:-0.11px;padding-right:1.41px">-1</div><div class="c r" style="left:1354.00px;top:346.44px;width:53.02px;letter-spacing:-0.11px;padding-right:1.41px">-1</div><div class="c r" style="left:1407.32px;top:346.44px;width:53.02px;letter-spacing:-0.11px;padding-right:1.41px">-1</div><div class="c r" style="left:1460.64px;top:346.44px;width:53.02px;letter-spacing:-0.36px;padding-right:1.66px">0</div><div class="c r" style="left:1513.96px;top:346.44px;width:53.02px;letter-spacing:-0.11px;padding-right:1.41px">-1</div><div class="c l" style="left:21.00px;top:363.10px;width:106.64px;letter-spacing:0.07px">Displayed Value 1</div><div class="c r" style="left:127.64px;top:363.10px;width:53.02px;letter-spacing:-0.36px;padding-right:1.66px">1</div><div class="c r" style="left:180.96px;top:363.10px;width:53.02px;letter-spacing:-0.36px;padding-right:1.66px">1</div><div class="c r" style="left:234.28px;top:363.10px;width:53.02px;letter-spacing:-0.36px;padding-right:1.66px">1</div><div class="c r" style="left:287.60px;top:363.10px;width:53.02px;letter-spacing:-0.36px;padding-right:1.66px">1</div><div class="c r" style="left:340.92px;top:363.10px;width:53.02px;letter-spacing:-0.21px;padding-right:1.51px">1.1</div><div class="c r" style="left:394.24px;top:363.10px;width:53.02px;letter-spacing:-0.25px;padding-right:1.55px">1.32</div><div class="c r" style="left:447.56px;top:363.10px;width:53.02px;letter-spacing:-0.25px;padding-right:1.55px">1.32</div><div class="c r" style="left:714.16px;top:363.10px;width:53.02px;letter-spacing:-0.21px;padding-right:1.51px">1.4</div><div class="c r" style="left:767.48px;top:363.10px;width:53.02px;letter-spacing:-0.36px;padding-right:1.66px">1</div><div class="c r" style="left:980.76px;top:363.10px;width:53.02px;letter-spacing:-0.21px;padding-right:1.51px">1.4</div><div class="c r" style="left:1034.08px;top:363.10px;width:53.02px;letter-spacing:-0.21px;padding-right:1.51px">1.2</div><div class="c r" style="left:1140.72px;top:363.10px;width:53.02px;letter-spacing:-0.25px;padding-right:1.55px">1.07</div><div class="c r" style="left:1194.04px;top:363.10px;width:53.02px;letter-spacing:-0.25px;padding-right:1.55px">1.07</div><div class="c r" style="left:1247.36px;top:363.10px;width:53.02px;letter-spacing:-0.25px;padding-right:1.55px">1.07</div><div class="c r" style="left:1300.68px;top:363.10px;width:53.02px;letter-spacing:-0.25px;padding-right:1.55px">1.07</div><div class="c r" style="left:1354.00px;top:363.10px;width:53.02px;letter-spacing:-0.25px;padding-right:1.55px">1.07</div><div class="c r" style="left:1407.32px;top:363.10px;width:53.02px;letter-spacing:-0.25px;padding-right:1.55px">1.07</div><div class="c r" style="left:1460.64px;top:363.10px;width:53.02px;letter-spacing:-0.36px;padding-right:1.66px">62</div><div class="c r" style="left:1513.96px;top:363.10px;width:53.02px;letter-spacing:-0.36px;padding-right:1.66px">1</div><div class="c l" style="left:21.00px;top:379.77px;width:106.64px;letter-spacing:0.07px">Displayed Value 2</div><div class="c r" style="left:127.64px;top:379.77px;width:53.02px;letter-spacing:-0.11px;padding-right:1.41px">-1</div><div class="c r" style="left:180.96px;top:379.77px;width:53.02px;letter-spacing:-0.11px;padding-right:1.41px">-1</div><div class="c r" style="left:234.28px;top:379.77px;width:53.02px;letter-spacing:-0.11px;padding-right:1.41px">-1</div><div class="c r" style="left:287.60px;top:379.77px;width:53.02px;letter-spacing:-0.11px;padding-right:1.41px">-1</div><div class="c r" style="left:340.92px;top:379.77px;width:53.02px;letter-spacing:-0.11px;padding-right:1.41px">-1</div><div class="c r" style="left:394.24px;top:379.77px;width:53.02px;letter-spacing:-0.11px;padding-right:1.41px">-1</div><div class="c r" style="left:447.56px;top:379.77px;width:53.02px;letter-spacing:-0.11px;padding-right:1.41px">-1</div><div class="c r" style="left:714.16px;top:379.77px;width:53.02px;letter-spacing:-0.11px;padding-right:1.41px">-1</div><div class="c r" style="left:767.48px;top:379.77px;width:53.02px;letter-spacing:-0.11px;padding-right:1.41px">-1</div><div class="c r" style="left:980.76px;top:379.77px;width:53.02px;letter-spacing:-0.11px;padding-right:1.41px">-1</div><div class="c r" style="left:1034.08px;top:379.77px;width:53.02px;letter-spacing:-0.11px;padding-right:1.41px">-1</div><div class="c r" style="left:1140.72px;top:379.77px;width:53.02px;letter-spacing:-0.11px;padding-right:1.41px">-1</div><div class="c r" style="left:1194.04px;top:379.77px;width:53.02px;letter-spacing:-0.11px;padding-right:1.41px">-1</div><div class="c r" style="left:1247.36px;top:379.77px;width:53.02px;letter-spacing:-0.11px;padding-right:1.41px">-1</div><div class="c r" style="left:1300.68px;top:379.77px;width:53.02px;letter-spacing:-0.11px;padding-right:1.41px">-1</div><div class="c r" style="left:1354.00px;top:379.77px;width:53.02px;letter-spacing:-0.11px;padding-right:1.41px">-1</div><div class="c r" style="left:1407.32px;top:379.77px;width:53.02px;letter-spacing:-0.11px;padding-right:1.41px">-1</div><div class="c r" style="left:1460.64px;top:379.77px;width:53.02px;letter-spacing:-0.36px;padding-right:1.66px">0</div><div class="c r" style="left:1513.96px;top:379.77px;width:53.02px;letter-spacing:-0.11px;padding-right:1.41px">-1</div><div class="c l" style="left:21.00px;top:396.44px;width:53.02px;letter-spacing:0.13px">Alarm 1</div><div class="c l" style="left:127.64px;top:396.44px;width:53.02px;letter-spacing:-0.80px">OFF</div><div class="c l" style="left:180.96px;top:396.44px;width:53.02px;letter-spacing:-0.80px">OFF</div><div class="c l" style="left:234.28px;top:396.44px;width:53.02px;letter-spacing:-0.80px">OFF</div><div class="c l" style="left:287.60px;top:396.44px;width:53.02px;letter-spacing:-0.80px">OFF</div><div class="c l" style="left:340.92px;top:396.44px;width:53.02px;letter-spacing:-0.80px">OFF</div><div class="c l" style="left:394.24px;top:396.44px;width:53.02px;letter-spacing:-0.80px">OFF</div><div class="c l" style="left:447.56px;top:396.44px;width:53.02px;letter-spacing:-0.80px">OFF</div><div class="c l" style="left:500.88px;top:396.44px;width:53.02px;letter-spacing:-0.80px">OFF</div><div class="c l" style="left:554.20px;top:396.44px;width:53.02px;letter-spacing:-0.80px">OFF</div><div class="c l" style="left:607.52px;top:396.44px;width:53.02px;letter-spacing:-0.80px">OFF</div><div class="c l" style="left:660.84px;top:396.44px;width:53.02px;letter-spacing:-0.80px">OFF</div><div class="c l" style="left:714.16px;top:396.44px;width:53.02px;letter-spacing:-0.80px">OFF</div><div class="c l" style="left:767.48px;top:396.44px;width:53.02px;letter-spacing:-0.80px">OFF</div><div class="c l" style="left:820.80px;top:396.44px;width:53.02px;letter-spacing:-0.80px">OFF</div><div class="c l" style="left:874.12px;top:396.44px;width:53.02px;letter-spacing:-0.80px">OFF</div><div class="c l" style="left:927.44px;top:396.44px;width:53.02px;letter-spacing:-0.80px">OFF</div><div class="c l" style="left:980.76px;top:396.44px;width:53.02px;letter-spacing:-0.80px">OFF</div><div class="c l" style="left:1034.08px;top:396.44px;width:53.02px;letter-spacing:-0.80px">OFF</div><div class="c l" style="left:1087.40px;top:396.44px;width:53.02px;letter-spacing:-0.80px">OFF</div><div class="c l" style="left:1140.72px;top:396.44px;width:53.02px;letter-spacing:-0.80px">OFF</div><div class="c l" style="left:1194.04px;top:396.44px;width:53.02px;letter-spacing:-0.80px">OFF</div><div class="c l" style="left:1247.36px;top:396.44px;width:53.02px;letter-spacing:-0.80px">OFF</div><div class="c l" style="left:1300.68px;top:396.44px;width:53.02px;letter-spacing:-0.80px">OFF</div><div class="c l" style="left:1354.00px;top:396.44px;width:53.02px;letter-spacing:-0.80px">OFF</div><div class="c l" style="left:1407.32px;top:396.44px;width:53.02px;letter-spacing:-0.80px">OFF</div><div class="c l" style="left:1460.64px;top:396.44px;width:53.02px;letter-spacing:-0.80px">OFF</div><div class="c l" style="left:1513.96px;top:396.44px;width:53.02px;letter-spacing:-0.80px">OFF</div><div class="c l" style="left:1567.28px;top:396.44px;width:15.72px;letter-spacing:-0.80px">OFF</div><div class="c l" style="left:21.00px;top:413.10px;width:53.02px;letter-spacing:0.21px">Value A</div><div class="c l" style="left:21.00px;top:429.77px;width:53.02px;letter-spacing:0.06px">Value B</div><div class="c l" style="left:21.00px;top:446.44px;width:106.64px;letter-spacing:0.22px">On delay time</div><div class="c l" style="left:21.00px;top:463.11px;width:106.64px;letter-spacing:0.44px">Alarm output</div><div class="c l" style="left:21.00px;top:479.77px;width:53.02px;letter-spacing:0.13px">Alarm 2</div><div class="c l" style="left:127.64px;top:479.77px;width:53.02px;letter-spacing:-0.80px">OFF</div><div class="c l" style="left:180.96px;top:479.77px;width:53.02px;letter-spacing:-0.80px">OFF</div><div class="c l" style="left:234.28px;top:479.77px;width:53.02px;letter-spacing:-0.80px">OFF</div><div class="c l" style="left:287.60px;top:479.77px;width:53.02px;letter-spacing:-0.80px">OFF</div><div class="c l" style="left:340.92px;top:479.77px;width:53.02px;letter-spacing:-0.80px">OFF</div><div class="c l" style="left:394.24px;top:479.77px;width:53.02px;letter-spacing:-0.80px">OFF</div><div class="c l" style="left:447.56px;top:479.77px;width:53.02px;letter-spacing:-0.80px">OFF</div><div class="c l" style="left:500.88px;top:479.77px;width:53.02px;letter-spacing:-0.80px">OFF</div><div class="c l" style="left:554.20px;top:479.77px;width:53.02px;letter-spacing:-0.80px">OFF</div><div class="c l" style="left:607.52px;top:479.77px;width:53.02px;letter-spacing:-0.80px">OFF</div><div class="c l" style="left:660.84px;top:479.77px;width:53.02px;letter-spacing:-0.80px">OFF</div><div class="c l" style="left:714.16px;top:479.77px;width:53.02px;letter-spacing:-0.80px">OFF</div><div class="c l" style="left:767.48px;top:479.77px;width:53.02px;letter-spacing:-0.80px">OFF</div><div class="c l" style="left:820.80px;top:479.77px;width:53.02px;letter-spacing:-0.80px">OFF</div><div class="c l" style="left:874.12px;top:479.77px;width:53.02px;letter-spacing:-0.80px">OFF</div><div class="c l" style="left:927.44px;top:479.77px;width:53.02px;letter-spacing:-0.80px">OFF</div><div class="c l" style="left:980.76px;top:479.77px;width:53.02px;letter-spacing:-0.80px">OFF</div><div class="c l" style="left:1034.08px;top:479.77px;width:53.02px;letter-spacing:-0.80px">OFF</div><div class="c l" style="left:1087.40px;top:479.77px;width:53.02px;letter-spacing:-0.80px">OFF</div><div class="c l" style="left:1140.72px;top:479.77px;width:53.02px;letter-spacing:-0.80px">OFF</div><div class="c l" style="left:1194.04px;top:479.77px;width:53.02px;letter-spacing:-0.80px">OFF</div><div class="c l" style="left:1247.36px;top:479.77px;width:53.02px;letter-spacing:-0.80px">OFF</div><div class="c l" style="left:1300.68px;top:479.77px;width:53.02px;letter-spacing:-0.80px">OFF</div><div class="c l" style="left:1354.00px;top:479.77px;width:53.02px;letter-spacing:-0.80px">OFF</div><div class="c l" style="left:1407.32px;top:479.77px;width:53.02px;letter-spacing:-0.80px">OFF</div><div class="c l" style="left:1460.64px;top:479.77px;width:53.02px;letter-spacing:-0.80px">OFF</div><div class="c l" style="left:1513.96px;top:479.77px;width:53.02px;letter-spacing:-0.80px">OFF</div><div class="c l" style="left:1567.28px;top:479.77px;width:15.72px;letter-spacing:-0.80px">OFF</div><div class="c l" style="left:21.00px;top:496.44px;width:53.02px;letter-spacing:0.21px">Value A</div><div class="c l" style="left:21.00px;top:513.11px;width:53.02px;letter-spacing:0.06px">Value B</div><div class="c l" style="left:21.00px;top:529.77px;width:106.64px;letter-spacing:0.22px">On delay time</div><div class="c l" style="left:21.00px;top:546.44px;width:106.64px;letter-spacing:0.44px">Alarm output</div><div class="c l" style="left:21.00px;top:563.11px;width:53.02px;letter-spacing:0.13px">Alarm 3</div><div class="c l" style="left:127.64px;top:563.11px;width:53.02px;letter-spacing:-0.80px">OFF</div><div class="c l" style="left:180.96px;top:563.11px;width:53.02px;letter-spacing:-0.80px">OFF</div><div class="c l" style="left:234.28px;top:563.11px;width:53.02px;letter-spacing:-0.80px">OFF</div><div class="c l" style="left:287.60px;top:563.11px;width:53.02px;letter-spacing:-0.80px">OFF</div><div class="c l" style="left:340.92px;top:563.11px;width:53.02px;letter-spacing:-0.80px">OFF</div><div class="c l" style="left:394.24px;top:563.11px;width:53.02px;letter-spacing:-0.80px">OFF</div><div class="c l" style="left:447.56px;top:563.11px;width:53.02px;letter-spacing:-0.80px">OFF</div><div class="c l" style="left:500.88px;top:563.11px;width:53.02px;letter-spacing:-0.80px">OFF</div><div class="c l" style="left:554.20px;top:563.11px;width:53.02px;letter-spacing:-0.80px">OFF</div><div class="c l" style="left:607.52px;top:563.11px;width:53.02px;letter-spacing:-0.80px">OFF</div><div class="c l" style="left:660.84px;top:563.11px;width:53.02px;letter-spacing:-0.80px">OFF</div><div class="c l" style="left:714.16px;top:563.11px;width:53.02px;letter-spacing:-0.80px">OFF</div><div class="c l" style="left:767.48px;top:563.11px;width:53.02px;letter-spacing:-0.80px">OFF</div><div class="c l" style="left:820.80px;top:563.11px;width:53.02px;letter-spacing:-0.80px">OFF</div><div class="c l" style="left:874.12px;top:563.11px;width:53.02px;letter-spacing:-0.80px">OFF</div><div class="c l" style="left:927.44px;top:563.11px;width:53.02px;letter-spacing:-0.80px">OFF</div><div class="c l" style="left:980.76px;top:563.11px;width:53.02px;letter-spacing:-0.80px">OFF</div><div class="c l" style="left:1034.08px;top:563.11px;width:53.02px;letter-spacing:-0.80px">OFF</div><div class="c l" style="left:1087.40px;top:563.11px;width:53.02px;letter-spacing:-0.80px">OFF</div><div class="c l" style="left:1140.72px;top:563.11px;width:53.02px;letter-spacing:-0.80px">OFF</div><div class="c l" style="left:1194.04px;top:563.11px;width:53.02px;letter-spacing:-0.80px">OFF</div><div class="c l" style="left:1247.36px;top:563.11px;width:53.02px;letter-spacing:-0.80px">OFF</div><div class="c l" style="left:1300.68px;top:563.11px;width:53.02px;letter-spacing:-0.80px">OFF</div><div class="c l" style="left:1354.00px;top:563.11px;width:53.02px;letter-spacing:-0.80px">OFF</div><div class="c l" style="left:1407.32px;top:563.11px;width:53.02px;letter-spacing:-0.80px">OFF</div><div class="c l" style="left:1460.64px;top:563.11px;width:53.02px;letter-spacing:-0.80px">OFF</div><div class="c l" style="left:1513.96px;top:563.11px;width:53.02px;letter-spacing:-0.80px">OFF</div><div class="c l" style="left:1567.28px;top:563.11px;width:15.72px;letter-spacing:-0.80px">OFF</div><div class="c l" style="left:21.00px;top:579.77px;width:53.02px;letter-spacing:0.21px">Value A</div><div class="c l" style="left:21.00px;top:596.44px;width:53.02px;letter-spacing:0.06px">Value B</div><div class="c l" style="left:21.00px;top:613.11px;width:106.64px;letter-spacing:0.22px">On delay time</div><div class="c l" style="left:21.00px;top:629.78px;width:106.64px;letter-spacing:0.44px">Alarm output</div><div class="c l" style="left:21.00px;top:646.44px;width:53.02px;letter-spacing:0.13px">Alarm 4</div><div class="c l" style="left:127.64px;top:646.44px;width:53.02px;letter-spacing:-0.80px">OFF</div><div class="c l" style="left:180.96px;top:646.44px;width:53.02px;letter-spacing:-0.80px">OFF</div><div class="c l" style="left:234.28px;top:646.44px;width:53.02px;letter-spacing:-0.80px">OFF</div><div class="c l" style="left:287.60px;top:646.44px;width:53.02px;letter-spacing:-0.80px">OFF</div><div class="c l" style="left:340.92px;top:646.44px;width:53.02px;letter-spacing:-0.80px">OFF</div><div class="c l" style="left:394.24px;top:646.44px;width:53.02px;letter-spacing:-0.80px">OFF</div><div class="c l" style="left:447.56px;top:646.44px;width:53.02px;letter-spacing:-0.80px">OFF</div><div class="c l" style="left:500.88px;top:646.44px;width:53.02px;letter-spacing:-0.80px">OFF</div><div class="c l" style="left:554.20px;top:646.44px;width:53.02px;letter-spacing:-0.80px">OFF</div><div class="c l" style="left:607.52px;top:646.44px;width:53.02px;letter-spacing:-0.80px">OFF</div><div class="c l" style="left:660.84px;top:646.44px;width:53.02px;letter-spacing:-0.80px">OFF</div><div class="c l" style="left:714.16px;top:646.44px;width:53.02px;letter-spacing:-0.80px">OFF</div><div class="c l" style="left:767.48px;top:646.44px;width:53.02px;letter-spacing:-0.80px">OFF</div><div class="c l" style="left:820.80px;top:646.44px;width:53.02px;letter-spacing:-0.80px">OFF</div><div class="c l" style="left:874.12px;top:646.44px;width:53.02px;letter-spacing:-0.80px">OFF</div><div class="c l" style="left:927.44px;top:646.44px;width:53.02px;letter-spacing:-0.80px">OFF</div><div class="c l" style="left:980.76px;top:646.44px;width:53.02px;letter-spacing:-0.80px">OFF</div><div class="c l" style="left:1034.08px;top:646.44px;width:53.02px;letter-spacing:-0.80px">OFF</div><div class="c l" style="left:1087.40px;top:646.44px;width:53.02px;letter-spacing:-0.80px">OFF</div><div class="c l" style="left:1140.72px;top:646.44px;width:53.02px;letter-spacing:-0.80px">OFF</div><div class="c l" style="left:1194.04px;top:646.44px;width:53.02px;letter-spacing:-0.80px">OFF</div><div class="c l" style="left:1247.36px;top:646.44px;width:53.02px;letter-spacing:-0.80px">OFF</div><div class="c l" style="left:1300.68px;top:646.44px;width:53.02px;letter-spacing:-0.80px">OFF</div><div class="c l" style="left:1354.00px;top:646.44px;width:53.02px;letter-spacing:-0.80px">OFF</div><div class="c l" style="left:1407.32px;top:646.44px;width:53.02px;letter-spacing:-0.80px">OFF</div><div class="c l" style="left:1460.64px;top:646.44px;width:53.02px;letter-spacing:-0.80px">OFF</div><div class="c l" style="left:1513.96px;top:646.44px;width:53.02px;letter-spacing:-0.80px">OFF</div><div class="c l" style="left:1567.28px;top:646.44px;width:15.72px;letter-spacing:-0.80px">OFF</div><div class="c l" style="left:21.00px;top:663.11px;width:53.02px;letter-spacing:0.21px">Value A</div><div class="c l" style="left:21.00px;top:679.78px;width:53.02px;letter-spacing:0.06px">Value B</div><div class="c l" style="left:21.00px;top:696.44px;width:106.64px;letter-spacing:0.22px">On delay time</div><div class="c l" style="left:21.00px;top:713.11px;width:106.64px;letter-spacing:0.44px">Alarm output</div><div class="c l" style="left:21.00px;top:746.44px;width:53.02px;letter-spacing:-0.14px">#EndHead</div><div class="c l" style="left:74.32px;top:746.44px;width:53.02px;letter-spacing:0.06px">ms</div><div class="c l" style="left:127.64px;top:746.44px;width:53.02px;letter-spacing:-0.46px">1)TH_CH1</div><div class="c l" style="left:180.96px;top:746.44px;width:53.02px;letter-spacing:-0.46px">1)TH_CH2</div><div class="c l" style="left:234.28px;top:746.44px;width:53.02px;letter-spacing:-0.46px">1)TH_CH3</div><div class="c l" style="left:287.60px;top:746.44px;width:53.02px;letter-spacing:-0.46px">1)TH_CH4</div><div class="c l" style="left:340.92px;top:746.44px;width:53.02px;letter-spacing:-0.46px">1)TH_CH5</div><div class="c l" style="left:394.24px;top:746.44px;width:53.02px;letter-spacing:-0.46px">1)TH_CH6</div><div class="c l" style="left:447.56px;top:746.44px;width:53.02px;letter-spacing:-0.46px">1)TH_CH7</div><div class="c l" style="left:500.88px;top:746.44px;width:53.02px;letter-spacing:-0.46px">1)TH_CH8</div><div class="c l" style="left:554.20px;top:746.44px;width:53.02px;letter-spacing:-0.46px">2)TH_CH1</div><div class="c l" style="left:607.52px;top:746.44px;width:53.02px;letter-spacing:-0.46px">2)TH_CH2</div><div class="c l" style="left:660.84px;top:746.44px;width:53.02px;letter-spacing:-0.46px">2)TH_CH3</div><div class="c l" style="left:714.16px;top:746.44px;width:53.02px;letter-spacing:-0.46px">2)TH_CH4</div><div class="c l" style="left:767.48px;top:746.44px;width:53.02px;letter-spacing:-0.46px">2)TH_CH5</div><div class="c l" style="left:820.80px;top:746.44px;width:53.02px;letter-spacing:-0.46px">2)TH_CH6</div><div class="c l" style="left:874.12px;top:746.44px;width:53.02px;letter-spacing:-0.46px">2)TH_CH7</div><div class="c l" style="left:927.44px;top:746.44px;width:53.02px;letter-spacing:-0.46px">2)TH_CH8</div><div class="c l" style="left:980.76px;top:746.44px;width:53.02px;letter-spacing:-0.46px">3)TH_CH1</div><div class="c l" style="left:1034.08px;top:746.44px;width:53.02px;letter-spacing:-0.46px">3)TH_CH2</div><div class="c l" style="left:1087.40px;top:746.44px;width:53.02px;letter-spacing:-0.46px">3)TH_CH3</div><div class="c l" style="left:1140.72px;top:746.44px;width:53.02px;letter-spacing:-0.46px">3)TH_CH4</div><div class="c l" style="left:1194.04px;top:746.44px;width:53.02px;letter-spacing:-0.46px">3)TH_CH5</div><div class="c l" style="left:1247.36px;top:746.44px;width:53.02px;letter-spacing:-0.46px">3)TH_CH6</div><div class="c l" style="left:1300.68px;top:746.44px;width:53.02px;letter-spacing:-0.46px">3)TH_CH7</div><div class="c l" style="left:1354.00px;top:746.44px;width:53.02px;letter-spacing:-0.46px">3)TH_CH8</div><div class="c l" style="left:1407.32px;top:746.44px;width:53.02px;letter-spacing:-0.46px">4)TH_CH1</div><div class="c l" style="left:1460.64px;top:746.44px;width:53.02px;letter-spacing:-0.46px">4)TH_CH2</div><div class="c l" style="left:1513.96px;top:746.44px;width:53.02px;letter-spacing:-0.46px">4)TH_CH3</div><div class="c l" style="left:1567.28px;top:746.44px;width:15.72px;letter-spacing:-0.46px">4)TH_CH4</div><div class="c l" style="left:21.00px;top:763.11px;width:53.02px;letter-spacing:0.11px">08/30/202</div><div class="c r" style="left:74.32px;top:763.11px;width:53.02px;letter-spacing:-0.36px;padding-right:1.66px">520</div><div class="c r" style="left:127.64px;top:763.11px;width:53.02px;letter-spacing:-0.11px;padding-right:1.41px">116.5</div><div class="c r" style="left:180.96px;top:763.11px;width:53.02px;letter-spacing:-0.11px;padding-right:1.41px">117.7</div><div class="c r" style="left:234.28px;top:763.11px;width:53.02px;letter-spacing:-0.11px;padding-right:1.41px">119.5</div><div class="c r" style="left:287.60px;top:763.11px;width:53.02px;letter-spacing:-0.11px;padding-right:1.41px">117.7</div><div class="c r" style="left:340.92px;top:763.11px;width:53.02px;letter-spacing:-0.11px;padding-right:1.41px">117.5</div><div class="c r" style="left:394.24px;top:763.11px;width:53.02px;letter-spacing:-0.29px;padding-right:1.59px">127.47</div><div class="c r" style="left:447.56px;top:763.11px;width:53.02px;letter-spacing:-0.29px;padding-right:1.59px">127.64</div><div class="c r" style="left:500.88px;top:763.11px;width:53.02px;letter-spacing:-0.27px;padding-right:1.57px">94.55</div><div class="c r" style="left:554.20px;top:763.11px;width:53.02px;letter-spacing:-0.29px;padding-right:1.59px">100.05</div><div class="c r" style="left:607.52px;top:763.11px;width:53.02px;letter-spacing:-0.27px;padding-right:1.57px">104.8</div><div class="c r" style="left:660.84px;top:763.11px;width:53.02px;letter-spacing:-0.29px;padding-right:1.59px">107.65</div><div class="c r" style="left:714.16px;top:763.11px;width:53.02px;letter-spacing:-0.27px;padding-right:1.57px">120.5</div><div class="c r" style="left:767.48px;top:763.11px;width:53.02px;letter-spacing:-0.36px;padding-right:1.66px">90</div><div class="c r" style="left:820.80px;top:763.11px;width:53.02px;letter-spacing:-0.29px;padding-right:1.59px">100.35</div><div class="c r" style="left:874.12px;top:763.11px;width:53.02px;letter-spacing:-0.27px;padding-right:1.57px">101.1</div><div class="c r" style="left:927.44px;top:763.11px;width:53.02px;letter-spacing:-0.27px;padding-right:1.57px">104.2</div><div class="c r" style="left:980.76px;top:763.11px;width:53.02px;letter-spacing:-0.15px;padding-right:1.45px">117.32</div><div class="c r" style="left:1034.08px;top:763.11px;width:53.02px;letter-spacing:-0.29px;padding-right:1.59px">105.59</div><div class="c r" style="left:1087.40px;top:763.11px;width:53.02px;letter-spacing:-0.25px;padding-right:1.55px">49.7</div><div class="c r" style="left:1140.72px;top:763.11px;width:53.02px;letter-spacing:-0.29px;padding-right:1.59px">289.31</div><div class="c r" style="left:1194.04px;top:763.11px;width:53.02px;letter-spacing:-0.27px;padding-right:1.57px">349.5</div><div class="c r" style="left:1247.36px;top:763.11px;width:53.02px;letter-spacing:-0.29px;padding-right:1.59px">340.29</div><div class="c r" style="left:1300.68px;top:763.11px;width:53.02px;letter-spacing:-0.29px;padding-right:1.59px">330.66</div><div class="c r" style="left:1354.00px;top:763.11px;width:53.02px;letter-spacing:-0.29px;padding-right:1.59px">319.85</div><div class="c r" style="left:1407.32px;top:763.11px;width:53.02px;letter-spacing:-0.29px;padding-right:1.59px">307.89</div><div class="c r" style="left:1460.64px;top:763.11px;width:53.02px;letter-spacing:-0.25px;padding-right:1.55px">3.49</div><div class="c r" style="left:1513.96px;top:763.11px;width:53.02px;letter-spacing:-0.27px;padding-right:1.57px">0.028</div><div class="c l" style="left:21.00px;top:779.78px;width:53.02px;letter-spacing:0.11px">08/30/202</div><div class="c r" style="left:74.32px;top:779.78px;width:53.02px;letter-spacing:-0.36px;padding-right:1.66px">520</div><div class="c r" style="left:127.64px;top:779.78px;width:53.02px;letter-spacing:-0.11px;padding-right:1.41px">116.3</div><div class="c r" style="left:180.96px;top:779.78px;width:53.02px;letter-spacing:-0.11px;padding-right:1.41px">117.6</div><div class="c r" style="left:234.28px;top:779.78px;width:53.02px;letter-spacing:-0.11px;padding-right:1.41px">119.5</div><div class="c r" style="left:287.60px;top:779.78px;width:53.02px;letter-spacing:-0.11px;padding-right:1.41px">117.7</div><div class="c r" style="left:340.92px;top:779.78px;width:53.02px;letter-spacing:-0.11px;padding-right:1.41px">117.4</div><div class="c r" style="left:394.24px;top:779.78px;width:53.02px;letter-spacing:-0.29px;padding-right:1.59px">127.52</div><div class="c r" style="left:447.56px;top:779.78px;width:53.02px;letter-spacing:-0.29px;padding-right:1.59px">127.58</div><div class="c r" style="left:500.88px;top:779.78px;width:53.02px;letter-spacing:-0.27px;padding-right:1.57px">94.55</div><div class="c r" style="left:554.20px;top:779.78px;width:53.02px;letter-spacing:-0.29px;padding-right:1.59px">100.05</div><div class="c r" style="left:607.52px;top:779.78px;width:53.02px;letter-spacing:-0.27px;padding-right:1.57px">104.8</div><div class="c r" style="left:660.84px;top:779.78px;width:53.02px;letter-spacing:-0.29px;padding-right:1.59px">107.65</div><div class="c r" style="left:714.16px;top:779.78px;width:53.02px;letter-spacing:-0.27px;padding-right:1.57px">120.5</div><div class="c r" style="left:767.48px;top:779.78px;width:53.02px;letter-spacing:-0.36px;padding-right:1.66px">90</div><div class="c r" style="left:820.80px;top:779.78px;width:53.02px;letter-spacing:-0.29px;padding-right:1.59px">100.35</div><div class="c r" style="left:874.12px;top:779.78px;width:53.02px;letter-spacing:-0.29px;padding-right:1.59px">101.05</div><div class="c r" style="left:927.44px;top:779.78px;width:53.02px;letter-spacing:-0.27px;padding-right:1.57px">104.2</div><div class="c r" style="left:980.76px;top:779.78px;width:53.02px;letter-spacing:-0.11px;padding-right:1.41px">117.2</div><div class="c r" style="left:1034.08px;top:779.78px;width:53.02px;letter-spacing:-0.29px;padding-right:1.59px">105.59</div><div class="c r" style="left:1087.40px;top:779.78px;width:53.02px;letter-spacing:-0.25px;padding-right:1.55px">49.7</div><div class="c r" style="left:1140.72px;top:779.78px;width:53.02px;letter-spacing:-0.15px;padding-right:1.45px">289.11</div><div class="c r" style="left:1194.04px;top:779.78px;width:53.02px;letter-spacing:-0.27px;padding-right:1.57px">349.7</div><div class="c r" style="left:1247.36px;top:779.78px;width:53.02px;letter-spacing:-0.29px;padding-right:1.59px">340.34</div><div class="c r" style="left:1300.68px;top:779.78px;width:53.02px;letter-spacing:-0.29px;padding-right:1.59px">330.51</div><div class="c r" style="left:1354.00px;top:779.78px;width:53.02px;letter-spacing:-0.29px;padding-right:1.59px">319.74</div><div class="c r" style="left:1407.32px;top:779.78px;width:53.02px;letter-spacing:-0.29px;padding-right:1.59px">307.99</div><div class="c r" style="left:1460.64px;top:779.78px;width:53.02px;letter-spacing:-0.27px;padding-right:1.57px">3.478</div><div class="c r" style="left:1513.96px;top:779.78px;width:53.02px;letter-spacing:-0.27px;padding-right:1.57px">0.053</div><div class="c l" style="left:21.00px;top:796.45px;width:53.02px;letter-spacing:0.11px">08/30/202</div><div class="c r" style="left:74.32px;top:796.45px;width:53.02px;letter-spacing:-0.36px;padding-right:1.66px">520</div><div class="c r" style="left:127.64px;top:796.45px;width:53.02px;letter-spacing:-0.11px;padding-right:1.41px">116.5</div><div class="c r" style="left:180.96px;top:796.45px;width:53.02px;letter-spacing:-0.11px;padding-right:1.41px">117.8</div><div class="c r" style="left:234.28px;top:796.45px;width:53.02px;letter-spacing:-0.11px;padding-right:1.41px">119.5</div><div class="c r" style="left:287.60px;top:796.45px;width:53.02px;letter-spacing:-0.11px;padding-right:1.41px">117.8</div><div class="c r" style="left:340.92px;top:796.45px;width:53.02px;letter-spacing:-0.11px;padding-right:1.41px">117.6</div><div class="c r" style="left:394.24px;top:796.45px;width:53.02px;letter-spacing:-0.29px;padding-right:1.59px">127.58</div><div class="c r" style="left:447.56px;top:796.45px;width:53.02px;letter-spacing:-0.29px;padding-right:1.59px">127.64</div><div class="c r" style="left:500.88px;top:796.45px;width:53.02px;letter-spacing:-0.25px;padding-right:1.55px">94.6</div><div class="c r" style="left:554.20px;top:796.45px;width:53.02px;letter-spacing:-0.36px;padding-right:1.66px">100</div><div class="c r" style="left:607.52px;top:796.45px;width:53.02px;letter-spacing:-0.27px;padding-right:1.57px">104.8</div><div class="c r" style="left:660.84px;top:796.45px;width:53.02px;letter-spacing:-0.29px;padding-right:1.59px">107.65</div><div class="c r" style="left:714.16px;top:796.45px;width:53.02px;letter-spacing:-0.29px;padding-right:1.59px">120.56</div><div class="c r" style="left:767.48px;top:796.45px;width:53.02px;letter-spacing:-0.27px;padding-right:1.57px">89.95</div><div class="c r" style="left:820.80px;top:796.45px;width:53.02px;letter-spacing:-0.29px;padding-right:1.59px">100.35</div><div class="c r" style="left:874.12px;top:796.45px;width:53.02px;letter-spacing:-0.29px;padding-right:1.59px">101.05</div><div class="c r" style="left:927.44px;top:796.45px;width:53.02px;letter-spacing:-0.27px;padding-right:1.57px">104.2</div><div class="c r" style="left:980.76px;top:796.45px;width:53.02px;letter-spacing:-0.11px;padding-right:1.41px">117.2</div><div class="c r" style="left:1034.08px;top:796.45px;width:53.02px;letter-spacing:-0.29px;padding-right:1.59px">105.59</div><div class="c r" style="left:1087.40px;top:796.45px;width:53.02px;letter-spacing:-0.27px;padding-right:1.57px">49.75</div><div class="c r" style="left:1140.72px;top:796.45px;width:53.02px;letter-spacing:-0.29px;padding-right:1.59px">289.16</div><div class="c r" style="left:1194.04px;top:796.45px;width:53.02px;letter-spacing:-0.29px;padding-right:1.59px">349.65</div><div class="c r" style="left:1247.36px;top:796.45px;width:53.02px;letter-spacing:-0.29px;padding-right:1.59px">340.44</div><div class="c r" style="left:1300.68px;top:796.45px;width:53.02px;letter-spacing:-0.27px;padding-right:1.57px">330.4</div><div class="c r" style="left:1354.00px;top:796.45px;width:53.02px;letter-spacing:-0.29px;padding-right:1.59px">319.69</div><div class="c r" style="left:1407.32px;top:796.45px;width:53.02px;letter-spacing:-0.29px;padding-right:1.59px">307.84</div><div class="c r" style="left:1460.64px;top:796.45px;width:53.02px;letter-spacing:-0.27px;padding-right:1.57px">3.465</div><div class="c r" style="left:1513.96px;top:796.45px;width:53.02px;letter-spacing:-0.27px;padding-right:1.57px">0.127</div><div class="c l" style="left:21.00px;top:813.11px;width:53.02px;letter-spacing:0.11px">08/30/202</div><div class="c r" style="left:74.32px;top:813.11px;width:53.02px;letter-spacing:-0.36px;padding-right:1.66px">520</div><div class="c r" style="left:127.64px;top:813.11px;width:53.02px;letter-spacing:-0.11px;padding-right:1.41px">116.5</div><div class="c r" style="left:180.96px;top:813.11px;width:53.02px;letter-spacing:-0.11px;padding-right:1.41px">117.8</div><div class="c r" style="left:234.28px;top:813.11px;width:53.02px;letter-spacing:-0.11px;padding-right:1.41px">119.5</div><div class="c r" style="left:287.60px;top:813.11px;width:53.02px;letter-spacing:-0.11px;padding-right:1.41px">117.7</div><div class="c r" style="left:340.92px;top:813.11px;width:53.02px;letter-spacing:-0.11px;padding-right:1.41px">117.6</div><div class="c r" style="left:394.24px;top:813.11px;width:53.02px;letter-spacing:-0.29px;padding-right:1.59px">127.58</div><div class="c r" style="left:447.56px;top:813.11px;width:53.02px;letter-spacing:-0.27px;padding-right:1.57px">127.7</div><div class="c r" style="left:500.88px;top:813.11px;width:53.02px;letter-spacing:-0.25px;padding-right:1.55px">94.6</div><div class="c r" style="left:554.20px;top:813.11px;width:53.02px;letter-spacing:-0.29px;padding-right:1.59px">100.05</div><div class="c r" style="left:607.52px;top:813.11px;width:53.02px;letter-spacing:-0.27px;padding-right:1.57px">104.8</div><div class="c r" style="left:660.84px;top:813.11px;width:53.02px;letter-spacing:-0.29px;padding-right:1.59px">107.65</div><div class="c r" style="left:714.16px;top:813.11px;width:53.02px;letter-spacing:-0.29px;padding-right:1.59px">120.56</div><div class="c r" style="left:767.48px;top:813.11px;width:53.02px;letter-spacing:-0.36px;padding-right:1.66px">90</div><div class="c r" style="left:820.80px;top:813.11px;width:53.02px;letter-spacing:-0.29px;padding-right:1.59px">100.35</div><div class="c r" style="left:874.12px;top:813.11px;width:53.02px;letter-spacing:-0.27px;padding-right:1.57px">101.1</div><div class="c r" style="left:927.44px;top:813.11px;width:53.02px;letter-spacing:-0.27px;padding-right:1.57px">104.2</div><div class="c r" style="left:980.76px;top:813.11px;width:53.02px;letter-spacing:-0.11px;padding-right:1.41px">117.2</div><div class="c r" style="left:1034.08px;top:813.11px;width:53.02px;letter-spacing:-0.29px;padding-right:1.59px">105.59</div><div class="c r" style="left:1087.40px;top:813.11px;width:53.02px;letter-spacing:-0.27px;padding-right:1.57px">49.65</div><div class="c r" style="left:1140.72px;top:813.11px;width:53.02px;letter-spacing:-0.15px;padding-right:1.45px">289.11</div><div class="c r" style="left:1194.04px;top:813.11px;width:53.02px;letter-spacing:-0.27px;padding-right:1.57px">349.7</div><div class="c r" style="left:1247.36px;top:813.11px;width:53.02px;letter-spacing:-0.29px;padding-right:1.59px">340.44</div><div class="c r" style="left:1300.68px;top:813.11px;width:53.02px;letter-spacing:-0.29px;padding-right:1.59px">330.45</div><div class="c r" style="left:1354.00px;top:813.11px;width:53.02px;letter-spacing:-0.29px;padding-right:1.59px">319.85</div><div class="c r" style="left:1407.32px;top:813.11px;width:53.02px;letter-spacing:-0.29px;padding-right:1.59px">307.94</div><div class="c r" style="left:1460.64px;top:813.11px;width:53.02px;letter-spacing:-0.27px;padding-right:1.57px">3.478</div><div class="c r" style="left:1513.96px;top:813.11px;width:53.02px;letter-spacing:-0.27px;padding-right:1.57px">0.095</div><div style="position:absolute;left:1583px;top:193px;width:17px;height:633px;background:#e6e6e6"></div><div style="position:absolute;left:1585px;top:195px;width:12px;height:13px;background:#fff;border:1px solid #c6c6c6;box-sizing:border-box"></div><svg style="position:absolute;left:1588px;top:199px" width="7" height="5"><path d="M0 4 h6 l-3 -3z" fill="#777"/></svg><div style="position:absolute;left:1585px;top:212px;width:12px;height:14px;background:#fff;border:1px solid #c6c6c6;box-sizing:border-box"></div><div style="position:absolute;left:1585px;top:814px;width:12px;height:13px;background:#fff;border:1px solid #c6c6c6;box-sizing:border-box"></div><svg style="position:absolute;left:1588px;top:819px" width="7" height="5"><path d="M0 0 h6 l-3 3z" fill="#777"/></svg><div style="position:absolute;left:1582px;top:209px;width:1px;height:617px;background:#c6c6c6"></div><div style="position:absolute;left:0px;top:825px;width:1600px;height:24px;background:#e6e6e6;border-top:1px solid #c6c6c6;box-sizing:border-box"></div><svg style="position:absolute;left:20px;top:832px" width="30" height="12"><path d="M5 2 l-4 4 l4 4z" fill="#c6c6c6"/><path d="M25 2 l4 4 l-4 4z" fill="#c6c6c6"/></svg><div style="position:absolute;left:84px;top:826px;width:169px;height:20px;background:#fff;border-bottom:2px solid #217346;box-sizing:border-box"></div><div style="position:absolute;left:84px;top:826px;width:1px;height:20px;background:#c6c6c6"></div><div style="position:absolute;left:252px;top:826px;width:1px;height:20px;background:#c6c6c6"></div><div style="position:absolute;left:94px;top:830px;white-space:nowrap;font:bold 10.5px 'Liberation Sans', sans-serif;color:#217346;">DATA$0194_00000001_000001</div><svg style="position:absolute;left:279px;top:829px" width="15" height="15"><circle cx="7.5" cy="7.5" r="6" fill="none" stroke="#777" stroke-width="1.1"/><path d="M7.5 4.5 v6 M4.5 7.5 h6" stroke="#777" stroke-width="1.2"/></svg><svg style="position:absolute;left:959px;top:832px" width="4" height="12"><circle cx="2" cy="2" r="0.8" fill="#999"/><circle cx="2" cy="6" r="0.8" fill="#999"/><circle cx="2" cy="10" r="0.8" fill="#999"/></svg><div style="position:absolute;left:974px;top:831px;width:406px;height:13px;background:#fff;border:1px solid #c6c6c6;box-sizing:border-box"></div><div style="position:absolute;left:974px;top:831px;width:12px;height:13px;background:#fff;border:1px solid #c6c6c6;box-sizing:border-box"></div><svg style="position:absolute;left:977px;top:834px" width="6" height="8"><path d="M4 0 v7 l-3.5 -3.5z" fill="#666"/></svg><div style="position:absolute;left:1572px;top:831px;width:12px;height:13px;background:#fff;border:1px solid #c6c6c6;box-sizing:border-box"></div><svg style="position:absolute;left:1576px;top:834px" width="6" height="8"><path d="M1 0 v7 l3.5 -3.5z" fill="#666"/></svg><div style="position:absolute;left:0px;top:849px;width:1600px;height:18px;background:#f3f3f3"></div><div style="position:absolute;left:5px;top:852px;white-space:nowrap;font:10px 'Liberation Sans', sans-serif;color:#333;">Ready</div><div style="position:absolute;left:1363px;top:849px;width:27px;height:18px;background:#d6d6d6"></div><svg style="position:absolute;left:1360px;top:849px" width="240" height="18">
<g fill="none" stroke="#777" stroke-width="0.9">
<rect x="11.5" y="3.5" width="10" height="10"/><path d="M11.5 7 h10 M11.5 10 h10 M15 3.5 v10 M18.5 3.5 v10"/>
<rect x="43.5" y="3.5" width="10" height="10"/><path d="M45.5 6.5 h6 M45.5 9 h6 M45.5 11 h6"/>
<rect x="75.5" y="3.5" width="10" height="10"/><path d="M79 3.5 v5 h3 v-5"/>
</g>
<path d="M100 9 h5" stroke="#666" stroke-width="1.2"/><path d="M108 9 h84" stroke="#c0c0c0" stroke-width="0.8"/>
<rect x="149" y="5" width="3" height="8" fill="#777"/>
<path d="M193 9 h7 M196.5 5.5 v7" stroke="#666" stroke-width="1.2"/>
</svg><div style="position:absolute;left:1571px;top:851px;white-space:nowrap;font:10px 'Liberation Sans', sans-serif;color:#444;">100%</div><div style="position:absolute;left:0px;top:867px;width:1600px;height:30px;background:#1f3140"></div><svg style="position:absolute;left:12px;top:876px" width="16" height="16"><path d="M1 2.5 l6 -0.9 v5.9 h-6z M8 1.4 l7.5 -1.1 v7.2 h-7.5z M1 8.5 h6 v5.9 l-6 -0.9z M8 8.5 h7.5 v7.2 l-7.5 -1.1z" fill="#fff"/></svg><div style="position:absolute;left:40px;top:867px;width:287px;height:30px;background:#f0f0f0;border-top:1px solid #a0a0a0;box-sizing:border-box"></div><svg style="position:absolute;left:50px;top:875px" width="16" height="16"><circle cx="9.5" cy="6" r="4.5" fill="none" stroke="#222" stroke-width="1.2"/><path d="M6.3 9.2 l-5 5" stroke="#222" stroke-width="1.3"/></svg><div style="position:absolute;left:74px;top:877px;white-space:nowrap;font:12px 'Liberation Sans', sans-serif;color:#333;">Type here to search</div><svg style="position:absolute;left:330px;top:867px" width="420" height="30">
<circle cx="16.5" cy="15.5" r="6" fill="none" stroke="#fff" stroke-width="1.6"/>
<g fill="none" stroke="#fff" stroke-width="1.2"><rect x="50.5" y="11.5" width="9" height="8"/><path d="M49 9 h12 M49 22 h12 M62 9 v3 M62 14 v3 M62 19 v3"/></g>
<circle cx="99" cy="16" r="9" fill="#1a86d4"/><path d="M91 18 c2 -9 14 -9 16 -2 c-4 -2 -9 -1 -9 3 c0 3 4 4 8 3 c-4 5 -13 4 -15 -4z" fill="#5fd068"/><circle cx="99" cy="17" r="3" fill="#1f3140"/>
<path d="M129 11 h7 l2 2 h12 v12 h-21z" fill="#f5c243"/><rect x="135" y="18" width="9" height="5" fill="#3a86c8"/>
<path d="M172 12 h17 v14 h-17z" fill="#fff"/><path d="M176 12 c0 -5 9 -5 9 0" fill="none" stroke="#fff" stroke-width="1.4"/><rect x="176" y="15" width="4" height="4" fill="#f25022"/><rect x="181" y="15" width="4" height="4" fill="#7fba00"/><rect x="176" y="20" width="4" height="4" fill="#00a4ef"/><rect x="181" y="20" width="4" height="4" fill="#ffb900"/>
<path d="M212 13 l9 -4 l9 4 v11 h-18z" fill="#fff"/><path d="M212 13 l9 6 l9 -6" fill="none" stroke="#1f3140" stroke-width="1.2"/>
<rect x="253" y="9" width="14" height="13" fill="#ddd" stroke="#888"/><path d="M255 15 c3 -4 6 4 10 0" stroke="#c33" fill="none"/><path d="M258 23 h4 v3 h-4z" fill="#aaa"/>
<rect x="294" y="8" width="17" height="17" fill="#fff"/><text x="295" y="22" font-size="12" font-weight="bold" font-style="italic" fill="#1d3c8f" font-family="Liberation Sans">LS</text>
<rect x="334" y="9" width="17" height="15" fill="#555"/><rect x="336" y="11" width="13" height="10" fill="#ddd"/><path d="M337 16 c3 -4 6 4 10 0" stroke="#c33" fill="none"/>
<rect x="365" y="0" width="40" height="30" fill="#3c4d5b"/>
<rect x="379" y="9" width="16" height="14" fill="#185c37"/><rect x="385" y="10" width="10" height="12" fill="#fff" opacity="0.9"/><path d="M386 13 h8 M386 16 h8 M386 19 h8 M390 10 v12" stroke="#185c37" stroke-width="0.8"/><text x="380" y="20" font-size="9" font-weight="bold" fill="#fff" font-family="Liberation Sans">x</text>
</svg><svg style="position:absolute;left:1270px;top:867px" width="330" height="30">
<g fill="none" stroke="#fff" stroke-width="1.1"><rect x="8.5" y="9.5" width="18" height="13"/><path d="M11 13 h5 v6 h-5z M18 13 h6 M18 16 h6 M18 19 h6"/></g>
<path d="M147 17 l4 -4 l4 4" fill="none" stroke="#fff" stroke-width="1.3"/>
<g fill="none" stroke="#fff" stroke-width="1.1"><circle cx="168" cy="15" r="6.5"/><path d="M161.5 15 h13 M168 8.5 v13 M163 11 c3 2 7 2 10 0 M163 19 c3 -2 7 -2 10 0"/><path d="M168 8.5 c-3 3 -3 10 0 13 M168 8.5 c3 3 3 10 0 13"/></g>
<path d="M181 12 h3 l4 -3 v12 l-4 -3 h-3z" fill="none" stroke="#fff" stroke-width="1.1"/><path d="M191 12 c1.5 2 1.5 4 0 6 M194 10 c3 3 3 7 0 10" fill="none" stroke="#fff" stroke-width="1.1"/>
<path d="M293 9.5 h16 v11 h-9 l-3 3 v-3 h-4z" fill="none" stroke="#fff" stroke-width="1.1"/>
</svg><div style="position:absolute;left:1304px;top:876px;white-space:nowrap;font:11.6px 'Liberation Sans', sans-serif;color:#fff;letter-spacing:-0.15px">34°C&nbsp; Nắng rải rác</div><div style="position:absolute;left:1472px;top:870px;white-space:nowrap;font:10.5px 'Liberation Sans', sans-serif;color:#fff;">ENG</div><div style="position:absolute;left:1477px;top:884px;white-space:nowrap;font:10.5px 'Liberation Sans', sans-serif;color:#fff;">US</div><div style="position:absolute;left:1496px;top:870px;width:60px;text-align:center;font:10.5px 'Liberation Sans', sans-serif;color:#fff">10:20</div><div style="position:absolute;left:1496px;top:884px;width:60px;text-align:center;font:10.5px 'Liberation Sans', sans-serif;color:#fff;letter-spacing:-0.45px">30/08/2024</div><div style="position:absolute;left:1596px;top:867px;width:1px;height:30px;background:#7d8790"></div></body></html>
